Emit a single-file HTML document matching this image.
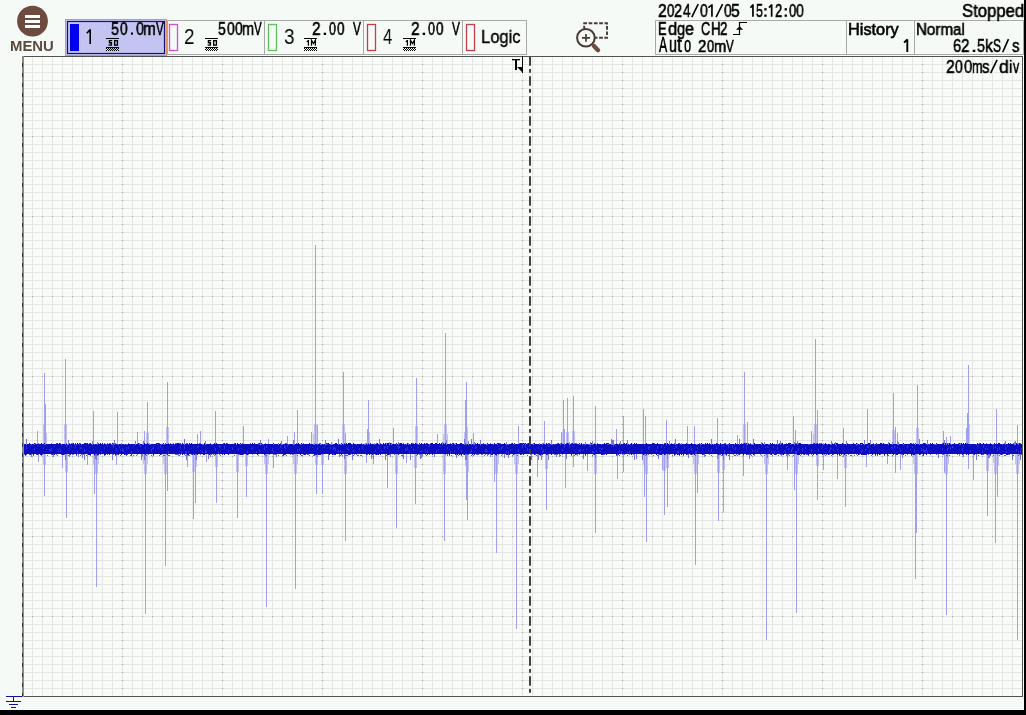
<!DOCTYPE html>
<html><head><meta charset="utf-8"><style>
html,body{margin:0;padding:0;}
body{width:1026px;height:715px;background:#f5faf6;position:relative;overflow:hidden;}
.t{position:absolute;white-space:pre;line-height:1;transform-origin:0 0;font-family:'Liberation Sans',sans-serif;will-change:transform;}
svg{position:absolute;left:0;top:0;}
</style></head><body>
<svg width="1026" height="715" viewBox="0 0 1026 715" shape-rendering="crispEdges">
<defs><pattern id="hatch" width="2" height="2" patternUnits="userSpaceOnUse"><rect x="0" y="0" width="1" height="1" fill="#000"/><rect x="1" y="1" width="1" height="1" fill="#000"/></pattern></defs>
<rect x="22" y="56" width="1001" height="641" fill="#f9fbf9"/>
<path d="M32.5 56V696M42.5 56V696M52.5 56V696M62.5 56V696M72.5 56V696M82.5 56V696M92.5 56V696M102.5 56V696M112.5 56V696M122.5 56V696M132.5 56V696M142.5 56V696M152.5 56V696M162.5 56V696M172.5 56V696M182.5 56V696M192.5 56V696M202.5 56V696M212.5 56V696M222.5 56V696M232.5 56V696M242.5 56V696M252.5 56V696M262.5 56V696M272.5 56V696M282.5 56V696M292.5 56V696M302.5 56V696M312.5 56V696M322.5 56V696M332.5 56V696M342.5 56V696M352.5 56V696M362.5 56V696M372.5 56V696M382.5 56V696M392.5 56V696M402.5 56V696M412.5 56V696M422.5 56V696M432.5 56V696M442.5 56V696M452.5 56V696M462.5 56V696M472.5 56V696M482.5 56V696M492.5 56V696M502.5 56V696M512.5 56V696M522.5 56V696M532.5 56V696M542.5 56V696M552.5 56V696M562.5 56V696M572.5 56V696M582.5 56V696M592.5 56V696M602.5 56V696M612.5 56V696M622.5 56V696M632.5 56V696M642.5 56V696M652.5 56V696M662.5 56V696M672.5 56V696M682.5 56V696M692.5 56V696M702.5 56V696M712.5 56V696M722.5 56V696M732.5 56V696M742.5 56V696M752.5 56V696M762.5 56V696M772.5 56V696M782.5 56V696M792.5 56V696M802.5 56V696M812.5 56V696M822.5 56V696M832.5 56V696M842.5 56V696M852.5 56V696M862.5 56V696M872.5 56V696M882.5 56V696M892.5 56V696M902.5 56V696M912.5 56V696M922.5 56V696M932.5 56V696M942.5 56V696M952.5 56V696M962.5 56V696M972.5 56V696M982.5 56V696M992.5 56V696M1002.5 56V696M1012.5 56V696M22 64.5H1022M22 72.5H1022M22 80.5H1022M22 88.5H1022M22 96.5H1022M22 104.5H1022M22 112.5H1022M22 120.5H1022M22 128.5H1022M22 136.5H1022M22 144.5H1022M22 152.5H1022M22 160.5H1022M22 168.5H1022M22 176.5H1022M22 184.5H1022M22 192.5H1022M22 200.5H1022M22 208.5H1022M22 216.5H1022M22 224.5H1022M22 232.5H1022M22 240.5H1022M22 248.5H1022M22 256.5H1022M22 264.5H1022M22 272.5H1022M22 280.5H1022M22 288.5H1022M22 296.5H1022M22 304.5H1022M22 312.5H1022M22 320.5H1022M22 328.5H1022M22 336.5H1022M22 344.5H1022M22 352.5H1022M22 360.5H1022M22 368.5H1022M22 376.5H1022M22 384.5H1022M22 392.5H1022M22 400.5H1022M22 408.5H1022M22 416.5H1022M22 424.5H1022M22 432.5H1022M22 440.5H1022M22 448.5H1022M22 456.5H1022M22 464.5H1022M22 472.5H1022M22 480.5H1022M22 488.5H1022M22 496.5H1022M22 504.5H1022M22 512.5H1022M22 520.5H1022M22 528.5H1022M22 536.5H1022M22 544.5H1022M22 552.5H1022M22 560.5H1022M22 568.5H1022M22 576.5H1022M22 584.5H1022M22 592.5H1022M22 600.5H1022M22 608.5H1022M22 616.5H1022M22 624.5H1022M22 632.5H1022M22 640.5H1022M22 648.5H1022M22 656.5H1022M22 664.5H1022M22 672.5H1022M22 680.5H1022M22 688.5H1022" stroke="#e3e6e3" stroke-width="1" fill="none"/>
<path d="M122 64h1v1h-1zM122 72h1v1h-1zM122 80h1v1h-1zM122 88h1v1h-1zM122 96h1v1h-1zM122 104h1v1h-1zM122 112h1v1h-1zM122 120h1v1h-1zM122 128h1v1h-1zM122 136h1v1h-1zM122 144h1v1h-1zM122 152h1v1h-1zM122 160h1v1h-1zM122 168h1v1h-1zM122 176h1v1h-1zM122 184h1v1h-1zM122 192h1v1h-1zM122 200h1v1h-1zM122 208h1v1h-1zM122 216h1v1h-1zM122 224h1v1h-1zM122 232h1v1h-1zM122 240h1v1h-1zM122 248h1v1h-1zM122 256h1v1h-1zM122 264h1v1h-1zM122 272h1v1h-1zM122 280h1v1h-1zM122 288h1v1h-1zM122 296h1v1h-1zM122 304h1v1h-1zM122 312h1v1h-1zM122 320h1v1h-1zM122 328h1v1h-1zM122 336h1v1h-1zM122 344h1v1h-1zM122 352h1v1h-1zM122 360h1v1h-1zM122 368h1v1h-1zM122 376h1v1h-1zM122 384h1v1h-1zM122 392h1v1h-1zM122 400h1v1h-1zM122 408h1v1h-1zM122 416h1v1h-1zM122 424h1v1h-1zM122 432h1v1h-1zM122 440h1v1h-1zM122 448h1v1h-1zM122 456h1v1h-1zM122 464h1v1h-1zM122 472h1v1h-1zM122 480h1v1h-1zM122 488h1v1h-1zM122 496h1v1h-1zM122 504h1v1h-1zM122 512h1v1h-1zM122 520h1v1h-1zM122 528h1v1h-1zM122 536h1v1h-1zM122 544h1v1h-1zM122 552h1v1h-1zM122 560h1v1h-1zM122 568h1v1h-1zM122 576h1v1h-1zM122 584h1v1h-1zM122 592h1v1h-1zM122 600h1v1h-1zM122 608h1v1h-1zM122 616h1v1h-1zM122 624h1v1h-1zM122 632h1v1h-1zM122 640h1v1h-1zM122 648h1v1h-1zM122 656h1v1h-1zM122 664h1v1h-1zM122 672h1v1h-1zM122 680h1v1h-1zM122 688h1v1h-1zM222 64h1v1h-1zM222 72h1v1h-1zM222 80h1v1h-1zM222 88h1v1h-1zM222 96h1v1h-1zM222 104h1v1h-1zM222 112h1v1h-1zM222 120h1v1h-1zM222 128h1v1h-1zM222 136h1v1h-1zM222 144h1v1h-1zM222 152h1v1h-1zM222 160h1v1h-1zM222 168h1v1h-1zM222 176h1v1h-1zM222 184h1v1h-1zM222 192h1v1h-1zM222 200h1v1h-1zM222 208h1v1h-1zM222 216h1v1h-1zM222 224h1v1h-1zM222 232h1v1h-1zM222 240h1v1h-1zM222 248h1v1h-1zM222 256h1v1h-1zM222 264h1v1h-1zM222 272h1v1h-1zM222 280h1v1h-1zM222 288h1v1h-1zM222 296h1v1h-1zM222 304h1v1h-1zM222 312h1v1h-1zM222 320h1v1h-1zM222 328h1v1h-1zM222 336h1v1h-1zM222 344h1v1h-1zM222 352h1v1h-1zM222 360h1v1h-1zM222 368h1v1h-1zM222 376h1v1h-1zM222 384h1v1h-1zM222 392h1v1h-1zM222 400h1v1h-1zM222 408h1v1h-1zM222 416h1v1h-1zM222 424h1v1h-1zM222 432h1v1h-1zM222 440h1v1h-1zM222 448h1v1h-1zM222 456h1v1h-1zM222 464h1v1h-1zM222 472h1v1h-1zM222 480h1v1h-1zM222 488h1v1h-1zM222 496h1v1h-1zM222 504h1v1h-1zM222 512h1v1h-1zM222 520h1v1h-1zM222 528h1v1h-1zM222 536h1v1h-1zM222 544h1v1h-1zM222 552h1v1h-1zM222 560h1v1h-1zM222 568h1v1h-1zM222 576h1v1h-1zM222 584h1v1h-1zM222 592h1v1h-1zM222 600h1v1h-1zM222 608h1v1h-1zM222 616h1v1h-1zM222 624h1v1h-1zM222 632h1v1h-1zM222 640h1v1h-1zM222 648h1v1h-1zM222 656h1v1h-1zM222 664h1v1h-1zM222 672h1v1h-1zM222 680h1v1h-1zM222 688h1v1h-1zM322 64h1v1h-1zM322 72h1v1h-1zM322 80h1v1h-1zM322 88h1v1h-1zM322 96h1v1h-1zM322 104h1v1h-1zM322 112h1v1h-1zM322 120h1v1h-1zM322 128h1v1h-1zM322 136h1v1h-1zM322 144h1v1h-1zM322 152h1v1h-1zM322 160h1v1h-1zM322 168h1v1h-1zM322 176h1v1h-1zM322 184h1v1h-1zM322 192h1v1h-1zM322 200h1v1h-1zM322 208h1v1h-1zM322 216h1v1h-1zM322 224h1v1h-1zM322 232h1v1h-1zM322 240h1v1h-1zM322 248h1v1h-1zM322 256h1v1h-1zM322 264h1v1h-1zM322 272h1v1h-1zM322 280h1v1h-1zM322 288h1v1h-1zM322 296h1v1h-1zM322 304h1v1h-1zM322 312h1v1h-1zM322 320h1v1h-1zM322 328h1v1h-1zM322 336h1v1h-1zM322 344h1v1h-1zM322 352h1v1h-1zM322 360h1v1h-1zM322 368h1v1h-1zM322 376h1v1h-1zM322 384h1v1h-1zM322 392h1v1h-1zM322 400h1v1h-1zM322 408h1v1h-1zM322 416h1v1h-1zM322 424h1v1h-1zM322 432h1v1h-1zM322 440h1v1h-1zM322 448h1v1h-1zM322 456h1v1h-1zM322 464h1v1h-1zM322 472h1v1h-1zM322 480h1v1h-1zM322 488h1v1h-1zM322 496h1v1h-1zM322 504h1v1h-1zM322 512h1v1h-1zM322 520h1v1h-1zM322 528h1v1h-1zM322 536h1v1h-1zM322 544h1v1h-1zM322 552h1v1h-1zM322 560h1v1h-1zM322 568h1v1h-1zM322 576h1v1h-1zM322 584h1v1h-1zM322 592h1v1h-1zM322 600h1v1h-1zM322 608h1v1h-1zM322 616h1v1h-1zM322 624h1v1h-1zM322 632h1v1h-1zM322 640h1v1h-1zM322 648h1v1h-1zM322 656h1v1h-1zM322 664h1v1h-1zM322 672h1v1h-1zM322 680h1v1h-1zM322 688h1v1h-1zM422 64h1v1h-1zM422 72h1v1h-1zM422 80h1v1h-1zM422 88h1v1h-1zM422 96h1v1h-1zM422 104h1v1h-1zM422 112h1v1h-1zM422 120h1v1h-1zM422 128h1v1h-1zM422 136h1v1h-1zM422 144h1v1h-1zM422 152h1v1h-1zM422 160h1v1h-1zM422 168h1v1h-1zM422 176h1v1h-1zM422 184h1v1h-1zM422 192h1v1h-1zM422 200h1v1h-1zM422 208h1v1h-1zM422 216h1v1h-1zM422 224h1v1h-1zM422 232h1v1h-1zM422 240h1v1h-1zM422 248h1v1h-1zM422 256h1v1h-1zM422 264h1v1h-1zM422 272h1v1h-1zM422 280h1v1h-1zM422 288h1v1h-1zM422 296h1v1h-1zM422 304h1v1h-1zM422 312h1v1h-1zM422 320h1v1h-1zM422 328h1v1h-1zM422 336h1v1h-1zM422 344h1v1h-1zM422 352h1v1h-1zM422 360h1v1h-1zM422 368h1v1h-1zM422 376h1v1h-1zM422 384h1v1h-1zM422 392h1v1h-1zM422 400h1v1h-1zM422 408h1v1h-1zM422 416h1v1h-1zM422 424h1v1h-1zM422 432h1v1h-1zM422 440h1v1h-1zM422 448h1v1h-1zM422 456h1v1h-1zM422 464h1v1h-1zM422 472h1v1h-1zM422 480h1v1h-1zM422 488h1v1h-1zM422 496h1v1h-1zM422 504h1v1h-1zM422 512h1v1h-1zM422 520h1v1h-1zM422 528h1v1h-1zM422 536h1v1h-1zM422 544h1v1h-1zM422 552h1v1h-1zM422 560h1v1h-1zM422 568h1v1h-1zM422 576h1v1h-1zM422 584h1v1h-1zM422 592h1v1h-1zM422 600h1v1h-1zM422 608h1v1h-1zM422 616h1v1h-1zM422 624h1v1h-1zM422 632h1v1h-1zM422 640h1v1h-1zM422 648h1v1h-1zM422 656h1v1h-1zM422 664h1v1h-1zM422 672h1v1h-1zM422 680h1v1h-1zM422 688h1v1h-1zM522 64h1v1h-1zM522 72h1v1h-1zM522 80h1v1h-1zM522 88h1v1h-1zM522 96h1v1h-1zM522 104h1v1h-1zM522 112h1v1h-1zM522 120h1v1h-1zM522 128h1v1h-1zM522 136h1v1h-1zM522 144h1v1h-1zM522 152h1v1h-1zM522 160h1v1h-1zM522 168h1v1h-1zM522 176h1v1h-1zM522 184h1v1h-1zM522 192h1v1h-1zM522 200h1v1h-1zM522 208h1v1h-1zM522 216h1v1h-1zM522 224h1v1h-1zM522 232h1v1h-1zM522 240h1v1h-1zM522 248h1v1h-1zM522 256h1v1h-1zM522 264h1v1h-1zM522 272h1v1h-1zM522 280h1v1h-1zM522 288h1v1h-1zM522 296h1v1h-1zM522 304h1v1h-1zM522 312h1v1h-1zM522 320h1v1h-1zM522 328h1v1h-1zM522 336h1v1h-1zM522 344h1v1h-1zM522 352h1v1h-1zM522 360h1v1h-1zM522 368h1v1h-1zM522 376h1v1h-1zM522 384h1v1h-1zM522 392h1v1h-1zM522 400h1v1h-1zM522 408h1v1h-1zM522 416h1v1h-1zM522 424h1v1h-1zM522 432h1v1h-1zM522 440h1v1h-1zM522 448h1v1h-1zM522 456h1v1h-1zM522 464h1v1h-1zM522 472h1v1h-1zM522 480h1v1h-1zM522 488h1v1h-1zM522 496h1v1h-1zM522 504h1v1h-1zM522 512h1v1h-1zM522 520h1v1h-1zM522 528h1v1h-1zM522 536h1v1h-1zM522 544h1v1h-1zM522 552h1v1h-1zM522 560h1v1h-1zM522 568h1v1h-1zM522 576h1v1h-1zM522 584h1v1h-1zM522 592h1v1h-1zM522 600h1v1h-1zM522 608h1v1h-1zM522 616h1v1h-1zM522 624h1v1h-1zM522 632h1v1h-1zM522 640h1v1h-1zM522 648h1v1h-1zM522 656h1v1h-1zM522 664h1v1h-1zM522 672h1v1h-1zM522 680h1v1h-1zM522 688h1v1h-1zM622 64h1v1h-1zM622 72h1v1h-1zM622 80h1v1h-1zM622 88h1v1h-1zM622 96h1v1h-1zM622 104h1v1h-1zM622 112h1v1h-1zM622 120h1v1h-1zM622 128h1v1h-1zM622 136h1v1h-1zM622 144h1v1h-1zM622 152h1v1h-1zM622 160h1v1h-1zM622 168h1v1h-1zM622 176h1v1h-1zM622 184h1v1h-1zM622 192h1v1h-1zM622 200h1v1h-1zM622 208h1v1h-1zM622 216h1v1h-1zM622 224h1v1h-1zM622 232h1v1h-1zM622 240h1v1h-1zM622 248h1v1h-1zM622 256h1v1h-1zM622 264h1v1h-1zM622 272h1v1h-1zM622 280h1v1h-1zM622 288h1v1h-1zM622 296h1v1h-1zM622 304h1v1h-1zM622 312h1v1h-1zM622 320h1v1h-1zM622 328h1v1h-1zM622 336h1v1h-1zM622 344h1v1h-1zM622 352h1v1h-1zM622 360h1v1h-1zM622 368h1v1h-1zM622 376h1v1h-1zM622 384h1v1h-1zM622 392h1v1h-1zM622 400h1v1h-1zM622 408h1v1h-1zM622 416h1v1h-1zM622 424h1v1h-1zM622 432h1v1h-1zM622 440h1v1h-1zM622 448h1v1h-1zM622 456h1v1h-1zM622 464h1v1h-1zM622 472h1v1h-1zM622 480h1v1h-1zM622 488h1v1h-1zM622 496h1v1h-1zM622 504h1v1h-1zM622 512h1v1h-1zM622 520h1v1h-1zM622 528h1v1h-1zM622 536h1v1h-1zM622 544h1v1h-1zM622 552h1v1h-1zM622 560h1v1h-1zM622 568h1v1h-1zM622 576h1v1h-1zM622 584h1v1h-1zM622 592h1v1h-1zM622 600h1v1h-1zM622 608h1v1h-1zM622 616h1v1h-1zM622 624h1v1h-1zM622 632h1v1h-1zM622 640h1v1h-1zM622 648h1v1h-1zM622 656h1v1h-1zM622 664h1v1h-1zM622 672h1v1h-1zM622 680h1v1h-1zM622 688h1v1h-1zM722 64h1v1h-1zM722 72h1v1h-1zM722 80h1v1h-1zM722 88h1v1h-1zM722 96h1v1h-1zM722 104h1v1h-1zM722 112h1v1h-1zM722 120h1v1h-1zM722 128h1v1h-1zM722 136h1v1h-1zM722 144h1v1h-1zM722 152h1v1h-1zM722 160h1v1h-1zM722 168h1v1h-1zM722 176h1v1h-1zM722 184h1v1h-1zM722 192h1v1h-1zM722 200h1v1h-1zM722 208h1v1h-1zM722 216h1v1h-1zM722 224h1v1h-1zM722 232h1v1h-1zM722 240h1v1h-1zM722 248h1v1h-1zM722 256h1v1h-1zM722 264h1v1h-1zM722 272h1v1h-1zM722 280h1v1h-1zM722 288h1v1h-1zM722 296h1v1h-1zM722 304h1v1h-1zM722 312h1v1h-1zM722 320h1v1h-1zM722 328h1v1h-1zM722 336h1v1h-1zM722 344h1v1h-1zM722 352h1v1h-1zM722 360h1v1h-1zM722 368h1v1h-1zM722 376h1v1h-1zM722 384h1v1h-1zM722 392h1v1h-1zM722 400h1v1h-1zM722 408h1v1h-1zM722 416h1v1h-1zM722 424h1v1h-1zM722 432h1v1h-1zM722 440h1v1h-1zM722 448h1v1h-1zM722 456h1v1h-1zM722 464h1v1h-1zM722 472h1v1h-1zM722 480h1v1h-1zM722 488h1v1h-1zM722 496h1v1h-1zM722 504h1v1h-1zM722 512h1v1h-1zM722 520h1v1h-1zM722 528h1v1h-1zM722 536h1v1h-1zM722 544h1v1h-1zM722 552h1v1h-1zM722 560h1v1h-1zM722 568h1v1h-1zM722 576h1v1h-1zM722 584h1v1h-1zM722 592h1v1h-1zM722 600h1v1h-1zM722 608h1v1h-1zM722 616h1v1h-1zM722 624h1v1h-1zM722 632h1v1h-1zM722 640h1v1h-1zM722 648h1v1h-1zM722 656h1v1h-1zM722 664h1v1h-1zM722 672h1v1h-1zM722 680h1v1h-1zM722 688h1v1h-1zM822 64h1v1h-1zM822 72h1v1h-1zM822 80h1v1h-1zM822 88h1v1h-1zM822 96h1v1h-1zM822 104h1v1h-1zM822 112h1v1h-1zM822 120h1v1h-1zM822 128h1v1h-1zM822 136h1v1h-1zM822 144h1v1h-1zM822 152h1v1h-1zM822 160h1v1h-1zM822 168h1v1h-1zM822 176h1v1h-1zM822 184h1v1h-1zM822 192h1v1h-1zM822 200h1v1h-1zM822 208h1v1h-1zM822 216h1v1h-1zM822 224h1v1h-1zM822 232h1v1h-1zM822 240h1v1h-1zM822 248h1v1h-1zM822 256h1v1h-1zM822 264h1v1h-1zM822 272h1v1h-1zM822 280h1v1h-1zM822 288h1v1h-1zM822 296h1v1h-1zM822 304h1v1h-1zM822 312h1v1h-1zM822 320h1v1h-1zM822 328h1v1h-1zM822 336h1v1h-1zM822 344h1v1h-1zM822 352h1v1h-1zM822 360h1v1h-1zM822 368h1v1h-1zM822 376h1v1h-1zM822 384h1v1h-1zM822 392h1v1h-1zM822 400h1v1h-1zM822 408h1v1h-1zM822 416h1v1h-1zM822 424h1v1h-1zM822 432h1v1h-1zM822 440h1v1h-1zM822 448h1v1h-1zM822 456h1v1h-1zM822 464h1v1h-1zM822 472h1v1h-1zM822 480h1v1h-1zM822 488h1v1h-1zM822 496h1v1h-1zM822 504h1v1h-1zM822 512h1v1h-1zM822 520h1v1h-1zM822 528h1v1h-1zM822 536h1v1h-1zM822 544h1v1h-1zM822 552h1v1h-1zM822 560h1v1h-1zM822 568h1v1h-1zM822 576h1v1h-1zM822 584h1v1h-1zM822 592h1v1h-1zM822 600h1v1h-1zM822 608h1v1h-1zM822 616h1v1h-1zM822 624h1v1h-1zM822 632h1v1h-1zM822 640h1v1h-1zM822 648h1v1h-1zM822 656h1v1h-1zM822 664h1v1h-1zM822 672h1v1h-1zM822 680h1v1h-1zM822 688h1v1h-1zM922 64h1v1h-1zM922 72h1v1h-1zM922 80h1v1h-1zM922 88h1v1h-1zM922 96h1v1h-1zM922 104h1v1h-1zM922 112h1v1h-1zM922 120h1v1h-1zM922 128h1v1h-1zM922 136h1v1h-1zM922 144h1v1h-1zM922 152h1v1h-1zM922 160h1v1h-1zM922 168h1v1h-1zM922 176h1v1h-1zM922 184h1v1h-1zM922 192h1v1h-1zM922 200h1v1h-1zM922 208h1v1h-1zM922 216h1v1h-1zM922 224h1v1h-1zM922 232h1v1h-1zM922 240h1v1h-1zM922 248h1v1h-1zM922 256h1v1h-1zM922 264h1v1h-1zM922 272h1v1h-1zM922 280h1v1h-1zM922 288h1v1h-1zM922 296h1v1h-1zM922 304h1v1h-1zM922 312h1v1h-1zM922 320h1v1h-1zM922 328h1v1h-1zM922 336h1v1h-1zM922 344h1v1h-1zM922 352h1v1h-1zM922 360h1v1h-1zM922 368h1v1h-1zM922 376h1v1h-1zM922 384h1v1h-1zM922 392h1v1h-1zM922 400h1v1h-1zM922 408h1v1h-1zM922 416h1v1h-1zM922 424h1v1h-1zM922 432h1v1h-1zM922 440h1v1h-1zM922 448h1v1h-1zM922 456h1v1h-1zM922 464h1v1h-1zM922 472h1v1h-1zM922 480h1v1h-1zM922 488h1v1h-1zM922 496h1v1h-1zM922 504h1v1h-1zM922 512h1v1h-1zM922 520h1v1h-1zM922 528h1v1h-1zM922 536h1v1h-1zM922 544h1v1h-1zM922 552h1v1h-1zM922 560h1v1h-1zM922 568h1v1h-1zM922 576h1v1h-1zM922 584h1v1h-1zM922 592h1v1h-1zM922 600h1v1h-1zM922 608h1v1h-1zM922 616h1v1h-1zM922 624h1v1h-1zM922 632h1v1h-1zM922 640h1v1h-1zM922 648h1v1h-1zM922 656h1v1h-1zM922 664h1v1h-1zM922 672h1v1h-1zM922 680h1v1h-1zM922 688h1v1h-1zM32 136h1v1h-1zM42 136h1v1h-1zM52 136h1v1h-1zM62 136h1v1h-1zM72 136h1v1h-1zM82 136h1v1h-1zM92 136h1v1h-1zM102 136h1v1h-1zM112 136h1v1h-1zM122 136h1v1h-1zM132 136h1v1h-1zM142 136h1v1h-1zM152 136h1v1h-1zM162 136h1v1h-1zM172 136h1v1h-1zM182 136h1v1h-1zM192 136h1v1h-1zM202 136h1v1h-1zM212 136h1v1h-1zM222 136h1v1h-1zM232 136h1v1h-1zM242 136h1v1h-1zM252 136h1v1h-1zM262 136h1v1h-1zM272 136h1v1h-1zM282 136h1v1h-1zM292 136h1v1h-1zM302 136h1v1h-1zM312 136h1v1h-1zM322 136h1v1h-1zM332 136h1v1h-1zM342 136h1v1h-1zM352 136h1v1h-1zM362 136h1v1h-1zM372 136h1v1h-1zM382 136h1v1h-1zM392 136h1v1h-1zM402 136h1v1h-1zM412 136h1v1h-1zM422 136h1v1h-1zM432 136h1v1h-1zM442 136h1v1h-1zM452 136h1v1h-1zM462 136h1v1h-1zM472 136h1v1h-1zM482 136h1v1h-1zM492 136h1v1h-1zM502 136h1v1h-1zM512 136h1v1h-1zM522 136h1v1h-1zM532 136h1v1h-1zM542 136h1v1h-1zM552 136h1v1h-1zM562 136h1v1h-1zM572 136h1v1h-1zM582 136h1v1h-1zM592 136h1v1h-1zM602 136h1v1h-1zM612 136h1v1h-1zM622 136h1v1h-1zM632 136h1v1h-1zM642 136h1v1h-1zM652 136h1v1h-1zM662 136h1v1h-1zM672 136h1v1h-1zM682 136h1v1h-1zM692 136h1v1h-1zM702 136h1v1h-1zM712 136h1v1h-1zM722 136h1v1h-1zM732 136h1v1h-1zM742 136h1v1h-1zM752 136h1v1h-1zM762 136h1v1h-1zM772 136h1v1h-1zM782 136h1v1h-1zM792 136h1v1h-1zM802 136h1v1h-1zM812 136h1v1h-1zM822 136h1v1h-1zM832 136h1v1h-1zM842 136h1v1h-1zM852 136h1v1h-1zM862 136h1v1h-1zM872 136h1v1h-1zM882 136h1v1h-1zM892 136h1v1h-1zM902 136h1v1h-1zM912 136h1v1h-1zM922 136h1v1h-1zM932 136h1v1h-1zM942 136h1v1h-1zM952 136h1v1h-1zM962 136h1v1h-1zM972 136h1v1h-1zM982 136h1v1h-1zM992 136h1v1h-1zM1002 136h1v1h-1zM1012 136h1v1h-1zM32 216h1v1h-1zM42 216h1v1h-1zM52 216h1v1h-1zM62 216h1v1h-1zM72 216h1v1h-1zM82 216h1v1h-1zM92 216h1v1h-1zM102 216h1v1h-1zM112 216h1v1h-1zM122 216h1v1h-1zM132 216h1v1h-1zM142 216h1v1h-1zM152 216h1v1h-1zM162 216h1v1h-1zM172 216h1v1h-1zM182 216h1v1h-1zM192 216h1v1h-1zM202 216h1v1h-1zM212 216h1v1h-1zM222 216h1v1h-1zM232 216h1v1h-1zM242 216h1v1h-1zM252 216h1v1h-1zM262 216h1v1h-1zM272 216h1v1h-1zM282 216h1v1h-1zM292 216h1v1h-1zM302 216h1v1h-1zM312 216h1v1h-1zM322 216h1v1h-1zM332 216h1v1h-1zM342 216h1v1h-1zM352 216h1v1h-1zM362 216h1v1h-1zM372 216h1v1h-1zM382 216h1v1h-1zM392 216h1v1h-1zM402 216h1v1h-1zM412 216h1v1h-1zM422 216h1v1h-1zM432 216h1v1h-1zM442 216h1v1h-1zM452 216h1v1h-1zM462 216h1v1h-1zM472 216h1v1h-1zM482 216h1v1h-1zM492 216h1v1h-1zM502 216h1v1h-1zM512 216h1v1h-1zM522 216h1v1h-1zM532 216h1v1h-1zM542 216h1v1h-1zM552 216h1v1h-1zM562 216h1v1h-1zM572 216h1v1h-1zM582 216h1v1h-1zM592 216h1v1h-1zM602 216h1v1h-1zM612 216h1v1h-1zM622 216h1v1h-1zM632 216h1v1h-1zM642 216h1v1h-1zM652 216h1v1h-1zM662 216h1v1h-1zM672 216h1v1h-1zM682 216h1v1h-1zM692 216h1v1h-1zM702 216h1v1h-1zM712 216h1v1h-1zM722 216h1v1h-1zM732 216h1v1h-1zM742 216h1v1h-1zM752 216h1v1h-1zM762 216h1v1h-1zM772 216h1v1h-1zM782 216h1v1h-1zM792 216h1v1h-1zM802 216h1v1h-1zM812 216h1v1h-1zM822 216h1v1h-1zM832 216h1v1h-1zM842 216h1v1h-1zM852 216h1v1h-1zM862 216h1v1h-1zM872 216h1v1h-1zM882 216h1v1h-1zM892 216h1v1h-1zM902 216h1v1h-1zM912 216h1v1h-1zM922 216h1v1h-1zM932 216h1v1h-1zM942 216h1v1h-1zM952 216h1v1h-1zM962 216h1v1h-1zM972 216h1v1h-1zM982 216h1v1h-1zM992 216h1v1h-1zM1002 216h1v1h-1zM1012 216h1v1h-1zM32 296h1v1h-1zM42 296h1v1h-1zM52 296h1v1h-1zM62 296h1v1h-1zM72 296h1v1h-1zM82 296h1v1h-1zM92 296h1v1h-1zM102 296h1v1h-1zM112 296h1v1h-1zM122 296h1v1h-1zM132 296h1v1h-1zM142 296h1v1h-1zM152 296h1v1h-1zM162 296h1v1h-1zM172 296h1v1h-1zM182 296h1v1h-1zM192 296h1v1h-1zM202 296h1v1h-1zM212 296h1v1h-1zM222 296h1v1h-1zM232 296h1v1h-1zM242 296h1v1h-1zM252 296h1v1h-1zM262 296h1v1h-1zM272 296h1v1h-1zM282 296h1v1h-1zM292 296h1v1h-1zM302 296h1v1h-1zM312 296h1v1h-1zM322 296h1v1h-1zM332 296h1v1h-1zM342 296h1v1h-1zM352 296h1v1h-1zM362 296h1v1h-1zM372 296h1v1h-1zM382 296h1v1h-1zM392 296h1v1h-1zM402 296h1v1h-1zM412 296h1v1h-1zM422 296h1v1h-1zM432 296h1v1h-1zM442 296h1v1h-1zM452 296h1v1h-1zM462 296h1v1h-1zM472 296h1v1h-1zM482 296h1v1h-1zM492 296h1v1h-1zM502 296h1v1h-1zM512 296h1v1h-1zM522 296h1v1h-1zM532 296h1v1h-1zM542 296h1v1h-1zM552 296h1v1h-1zM562 296h1v1h-1zM572 296h1v1h-1zM582 296h1v1h-1zM592 296h1v1h-1zM602 296h1v1h-1zM612 296h1v1h-1zM622 296h1v1h-1zM632 296h1v1h-1zM642 296h1v1h-1zM652 296h1v1h-1zM662 296h1v1h-1zM672 296h1v1h-1zM682 296h1v1h-1zM692 296h1v1h-1zM702 296h1v1h-1zM712 296h1v1h-1zM722 296h1v1h-1zM732 296h1v1h-1zM742 296h1v1h-1zM752 296h1v1h-1zM762 296h1v1h-1zM772 296h1v1h-1zM782 296h1v1h-1zM792 296h1v1h-1zM802 296h1v1h-1zM812 296h1v1h-1zM822 296h1v1h-1zM832 296h1v1h-1zM842 296h1v1h-1zM852 296h1v1h-1zM862 296h1v1h-1zM872 296h1v1h-1zM882 296h1v1h-1zM892 296h1v1h-1zM902 296h1v1h-1zM912 296h1v1h-1zM922 296h1v1h-1zM932 296h1v1h-1zM942 296h1v1h-1zM952 296h1v1h-1zM962 296h1v1h-1zM972 296h1v1h-1zM982 296h1v1h-1zM992 296h1v1h-1zM1002 296h1v1h-1zM1012 296h1v1h-1zM32 376h1v1h-1zM42 376h1v1h-1zM52 376h1v1h-1zM62 376h1v1h-1zM72 376h1v1h-1zM82 376h1v1h-1zM92 376h1v1h-1zM102 376h1v1h-1zM112 376h1v1h-1zM122 376h1v1h-1zM132 376h1v1h-1zM142 376h1v1h-1zM152 376h1v1h-1zM162 376h1v1h-1zM172 376h1v1h-1zM182 376h1v1h-1zM192 376h1v1h-1zM202 376h1v1h-1zM212 376h1v1h-1zM222 376h1v1h-1zM232 376h1v1h-1zM242 376h1v1h-1zM252 376h1v1h-1zM262 376h1v1h-1zM272 376h1v1h-1zM282 376h1v1h-1zM292 376h1v1h-1zM302 376h1v1h-1zM312 376h1v1h-1zM322 376h1v1h-1zM332 376h1v1h-1zM342 376h1v1h-1zM352 376h1v1h-1zM362 376h1v1h-1zM372 376h1v1h-1zM382 376h1v1h-1zM392 376h1v1h-1zM402 376h1v1h-1zM412 376h1v1h-1zM422 376h1v1h-1zM432 376h1v1h-1zM442 376h1v1h-1zM452 376h1v1h-1zM462 376h1v1h-1zM472 376h1v1h-1zM482 376h1v1h-1zM492 376h1v1h-1zM502 376h1v1h-1zM512 376h1v1h-1zM522 376h1v1h-1zM532 376h1v1h-1zM542 376h1v1h-1zM552 376h1v1h-1zM562 376h1v1h-1zM572 376h1v1h-1zM582 376h1v1h-1zM592 376h1v1h-1zM602 376h1v1h-1zM612 376h1v1h-1zM622 376h1v1h-1zM632 376h1v1h-1zM642 376h1v1h-1zM652 376h1v1h-1zM662 376h1v1h-1zM672 376h1v1h-1zM682 376h1v1h-1zM692 376h1v1h-1zM702 376h1v1h-1zM712 376h1v1h-1zM722 376h1v1h-1zM732 376h1v1h-1zM742 376h1v1h-1zM752 376h1v1h-1zM762 376h1v1h-1zM772 376h1v1h-1zM782 376h1v1h-1zM792 376h1v1h-1zM802 376h1v1h-1zM812 376h1v1h-1zM822 376h1v1h-1zM832 376h1v1h-1zM842 376h1v1h-1zM852 376h1v1h-1zM862 376h1v1h-1zM872 376h1v1h-1zM882 376h1v1h-1zM892 376h1v1h-1zM902 376h1v1h-1zM912 376h1v1h-1zM922 376h1v1h-1zM932 376h1v1h-1zM942 376h1v1h-1zM952 376h1v1h-1zM962 376h1v1h-1zM972 376h1v1h-1zM982 376h1v1h-1zM992 376h1v1h-1zM1002 376h1v1h-1zM1012 376h1v1h-1zM32 456h1v1h-1zM42 456h1v1h-1zM52 456h1v1h-1zM62 456h1v1h-1zM72 456h1v1h-1zM82 456h1v1h-1zM92 456h1v1h-1zM102 456h1v1h-1zM112 456h1v1h-1zM122 456h1v1h-1zM132 456h1v1h-1zM142 456h1v1h-1zM152 456h1v1h-1zM162 456h1v1h-1zM172 456h1v1h-1zM182 456h1v1h-1zM192 456h1v1h-1zM202 456h1v1h-1zM212 456h1v1h-1zM222 456h1v1h-1zM232 456h1v1h-1zM242 456h1v1h-1zM252 456h1v1h-1zM262 456h1v1h-1zM272 456h1v1h-1zM282 456h1v1h-1zM292 456h1v1h-1zM302 456h1v1h-1zM312 456h1v1h-1zM322 456h1v1h-1zM332 456h1v1h-1zM342 456h1v1h-1zM352 456h1v1h-1zM362 456h1v1h-1zM372 456h1v1h-1zM382 456h1v1h-1zM392 456h1v1h-1zM402 456h1v1h-1zM412 456h1v1h-1zM422 456h1v1h-1zM432 456h1v1h-1zM442 456h1v1h-1zM452 456h1v1h-1zM462 456h1v1h-1zM472 456h1v1h-1zM482 456h1v1h-1zM492 456h1v1h-1zM502 456h1v1h-1zM512 456h1v1h-1zM522 456h1v1h-1zM532 456h1v1h-1zM542 456h1v1h-1zM552 456h1v1h-1zM562 456h1v1h-1zM572 456h1v1h-1zM582 456h1v1h-1zM592 456h1v1h-1zM602 456h1v1h-1zM612 456h1v1h-1zM622 456h1v1h-1zM632 456h1v1h-1zM642 456h1v1h-1zM652 456h1v1h-1zM662 456h1v1h-1zM672 456h1v1h-1zM682 456h1v1h-1zM692 456h1v1h-1zM702 456h1v1h-1zM712 456h1v1h-1zM722 456h1v1h-1zM732 456h1v1h-1zM742 456h1v1h-1zM752 456h1v1h-1zM762 456h1v1h-1zM772 456h1v1h-1zM782 456h1v1h-1zM792 456h1v1h-1zM802 456h1v1h-1zM812 456h1v1h-1zM822 456h1v1h-1zM832 456h1v1h-1zM842 456h1v1h-1zM852 456h1v1h-1zM862 456h1v1h-1zM872 456h1v1h-1zM882 456h1v1h-1zM892 456h1v1h-1zM902 456h1v1h-1zM912 456h1v1h-1zM922 456h1v1h-1zM932 456h1v1h-1zM942 456h1v1h-1zM952 456h1v1h-1zM962 456h1v1h-1zM972 456h1v1h-1zM982 456h1v1h-1zM992 456h1v1h-1zM1002 456h1v1h-1zM1012 456h1v1h-1zM32 536h1v1h-1zM42 536h1v1h-1zM52 536h1v1h-1zM62 536h1v1h-1zM72 536h1v1h-1zM82 536h1v1h-1zM92 536h1v1h-1zM102 536h1v1h-1zM112 536h1v1h-1zM122 536h1v1h-1zM132 536h1v1h-1zM142 536h1v1h-1zM152 536h1v1h-1zM162 536h1v1h-1zM172 536h1v1h-1zM182 536h1v1h-1zM192 536h1v1h-1zM202 536h1v1h-1zM212 536h1v1h-1zM222 536h1v1h-1zM232 536h1v1h-1zM242 536h1v1h-1zM252 536h1v1h-1zM262 536h1v1h-1zM272 536h1v1h-1zM282 536h1v1h-1zM292 536h1v1h-1zM302 536h1v1h-1zM312 536h1v1h-1zM322 536h1v1h-1zM332 536h1v1h-1zM342 536h1v1h-1zM352 536h1v1h-1zM362 536h1v1h-1zM372 536h1v1h-1zM382 536h1v1h-1zM392 536h1v1h-1zM402 536h1v1h-1zM412 536h1v1h-1zM422 536h1v1h-1zM432 536h1v1h-1zM442 536h1v1h-1zM452 536h1v1h-1zM462 536h1v1h-1zM472 536h1v1h-1zM482 536h1v1h-1zM492 536h1v1h-1zM502 536h1v1h-1zM512 536h1v1h-1zM522 536h1v1h-1zM532 536h1v1h-1zM542 536h1v1h-1zM552 536h1v1h-1zM562 536h1v1h-1zM572 536h1v1h-1zM582 536h1v1h-1zM592 536h1v1h-1zM602 536h1v1h-1zM612 536h1v1h-1zM622 536h1v1h-1zM632 536h1v1h-1zM642 536h1v1h-1zM652 536h1v1h-1zM662 536h1v1h-1zM672 536h1v1h-1zM682 536h1v1h-1zM692 536h1v1h-1zM702 536h1v1h-1zM712 536h1v1h-1zM722 536h1v1h-1zM732 536h1v1h-1zM742 536h1v1h-1zM752 536h1v1h-1zM762 536h1v1h-1zM772 536h1v1h-1zM782 536h1v1h-1zM792 536h1v1h-1zM802 536h1v1h-1zM812 536h1v1h-1zM822 536h1v1h-1zM832 536h1v1h-1zM842 536h1v1h-1zM852 536h1v1h-1zM862 536h1v1h-1zM872 536h1v1h-1zM882 536h1v1h-1zM892 536h1v1h-1zM902 536h1v1h-1zM912 536h1v1h-1zM922 536h1v1h-1zM932 536h1v1h-1zM942 536h1v1h-1zM952 536h1v1h-1zM962 536h1v1h-1zM972 536h1v1h-1zM982 536h1v1h-1zM992 536h1v1h-1zM1002 536h1v1h-1zM1012 536h1v1h-1zM32 616h1v1h-1zM42 616h1v1h-1zM52 616h1v1h-1zM62 616h1v1h-1zM72 616h1v1h-1zM82 616h1v1h-1zM92 616h1v1h-1zM102 616h1v1h-1zM112 616h1v1h-1zM122 616h1v1h-1zM132 616h1v1h-1zM142 616h1v1h-1zM152 616h1v1h-1zM162 616h1v1h-1zM172 616h1v1h-1zM182 616h1v1h-1zM192 616h1v1h-1zM202 616h1v1h-1zM212 616h1v1h-1zM222 616h1v1h-1zM232 616h1v1h-1zM242 616h1v1h-1zM252 616h1v1h-1zM262 616h1v1h-1zM272 616h1v1h-1zM282 616h1v1h-1zM292 616h1v1h-1zM302 616h1v1h-1zM312 616h1v1h-1zM322 616h1v1h-1zM332 616h1v1h-1zM342 616h1v1h-1zM352 616h1v1h-1zM362 616h1v1h-1zM372 616h1v1h-1zM382 616h1v1h-1zM392 616h1v1h-1zM402 616h1v1h-1zM412 616h1v1h-1zM422 616h1v1h-1zM432 616h1v1h-1zM442 616h1v1h-1zM452 616h1v1h-1zM462 616h1v1h-1zM472 616h1v1h-1zM482 616h1v1h-1zM492 616h1v1h-1zM502 616h1v1h-1zM512 616h1v1h-1zM522 616h1v1h-1zM532 616h1v1h-1zM542 616h1v1h-1zM552 616h1v1h-1zM562 616h1v1h-1zM572 616h1v1h-1zM582 616h1v1h-1zM592 616h1v1h-1zM602 616h1v1h-1zM612 616h1v1h-1zM622 616h1v1h-1zM632 616h1v1h-1zM642 616h1v1h-1zM652 616h1v1h-1zM662 616h1v1h-1zM672 616h1v1h-1zM682 616h1v1h-1zM692 616h1v1h-1zM702 616h1v1h-1zM712 616h1v1h-1zM722 616h1v1h-1zM732 616h1v1h-1zM742 616h1v1h-1zM752 616h1v1h-1zM762 616h1v1h-1zM772 616h1v1h-1zM782 616h1v1h-1zM792 616h1v1h-1zM802 616h1v1h-1zM812 616h1v1h-1zM822 616h1v1h-1zM832 616h1v1h-1zM842 616h1v1h-1zM852 616h1v1h-1zM862 616h1v1h-1zM872 616h1v1h-1zM882 616h1v1h-1zM892 616h1v1h-1zM902 616h1v1h-1zM912 616h1v1h-1zM922 616h1v1h-1zM932 616h1v1h-1zM942 616h1v1h-1zM952 616h1v1h-1zM962 616h1v1h-1zM972 616h1v1h-1zM982 616h1v1h-1zM992 616h1v1h-1zM1002 616h1v1h-1zM1012 616h1v1h-1z" fill="#9ea09e"/>
<path d="M22 56.5H1023M1022.5 56V697M22 696.5H1023" stroke="#505450" stroke-width="1" fill="none"/>
<rect x="22" y="56" width="2" height="641" fill="#8a8c8a"/>
<path d="M22.5 63V696" stroke="#303030" stroke-width="1.2" stroke-dasharray="4 6" fill="none"/>
<path d="M43 424.0h3V446h-3zM44 433.4h3V446h-3zM64 424.0h3V446h-3zM146 432.8h3V446h-3zM166 426.7h3V446h-3zM314 424.0h3V446h-3zM313 434.0h5V446h-5zM342 424.0h3V446h-3zM367 432.2h3V446h-3zM415 425.5h3V446h-3zM444 424.0h3V446h-3zM443 434.0h5V446h-5zM465 426.8h3V446h-3zM464 432.2h3V446h-3zM562 432.2h3V446h-3zM566 431.6h3V446h-3zM572 431.0h3V446h-3zM743 424.0h3V446h-3zM814 424.0h3V446h-3zM813 434.0h5V446h-5zM814 432.2h3V446h-3zM892 429.9h3V446h-3zM916 427.6h3V446h-3zM967 424.0h3V446h-3zM43 452h3V465.1h-3zM65 452h3V471.8h-3zM95 452h3V474.0h-3zM94 452h5V464.0h-5zM93 452h3V464.6h-3zM144 452h3V474.0h-3zM143 452h5V464.0h-5zM164 452h3V474.0h-3zM163 452h5V464.0h-5zM192 452h3V472.1h-3zM194 452h3V467.3h-3zM215 452h3V467.1h-3zM236 452h3V471.8h-3zM245 452h3V465.5h-3zM265 452h3V474.0h-3zM264 452h5V464.0h-5zM294 452h3V474.0h-3zM293 452h5V464.0h-5zM315 452h3V464.5h-3zM321 452h3V464.5h-3zM344 452h3V474.0h-3zM395 452h3V474.0h-3zM414 452h3V467.6h-3zM443 452h3V474.0h-3zM466 452h3V472.4h-3zM465 452h3V466.4h-3zM495 452h3V474.0h-3zM494 452h5V464.0h-5zM515 452h3V474.0h-3zM514 452h5V464.0h-5zM545 452h3V469.3h-3zM594 452h3V474.0h-3zM643 452h3V465.4h-3zM645 452h3V474.0h-3zM663 452h3V470.9h-3zM666 452h3V468.4h-3zM694 452h3V474.0h-3zM693 452h5V464.0h-5zM696 452h3V464.2h-3zM717 452h3V472.7h-3zM722 452h3V470.0h-3zM765 452h3V474.0h-3zM764 452h5V464.0h-5zM795 452h3V474.0h-3zM794 452h5V464.0h-5zM816 452h3V466.4h-3zM844 452h3V468.4h-3zM914 452h3V474.0h-3zM913 452h5V464.0h-5zM915 452h3V474.0h-3zM945 452h3V474.0h-3zM944 452h5V464.0h-5zM986 452h3V471.2h-3zM994 452h3V474.0h-3zM993 452h5V462.9h-5zM996 452h3V465.5h-3zM1016 452h3V474.0h-3zM1015 452h5V464.0h-5z" fill="#c4c4f2"/>
<path d="M44.5 372.5V446M45.5 404.0V446M65.5 358.6V446M37.5 431.0V446M93.5 410.6V446M117.5 412.0V446M147.5 402.0V446M137.5 432.0V446M144.5 430.6V446M167.5 381.7V446M200.5 431.0V446M215.5 410.6V446M197.5 434.0V446M315.5 245.4V446M343.5 372.0V446M368.5 400.0V446M416.5 377.7V446M297.5 410.0V446M243.5 426.0V446M294.5 432.0V446M287.5 435.5V446M311.5 432.0V446M317.5 425.0V446M393.5 428.0V446M367.5 428.5V446M345.5 433.0V446M268.5 439.0V446M445.5 332.5V446M466.5 382.0V446M465.5 400.0V446M437.5 433.7V446M473.5 433.0V446M518.5 426.0V446M544.5 421.0V446M563.5 400.0V446M567.5 398.0V446M573.5 396.0V446M564.5 429.0V446M595.5 406.0V446M616.5 429.0V446M561.5 432.0V446M623.5 415.5V446M643.5 409.4V446M645.5 416.0V446M666.5 420.0V446M687.5 426.0V446M694.5 426.0V446M717.5 418.0V446M744.5 372.0V446M747.5 422.0V446M737.5 434.6V446M793.5 415.5V446M795.5 430.0V446M815.5 339.0V446M815.5 400.0V446M817.5 410.0V446M811.5 430.6V446M843.5 428.0V446M867.5 408.5V446M893.5 392.5V446M895.5 427.0V446M897.5 433.0V446M917.5 384.5V446M943.5 431.0V446M946.5 437.0V446M950.5 436.0V446M968.5 365.0V446M967.5 413.0V446M966.5 428.0V446M996.5 409.0V446M1017.5 425.0V446M44.5 452V495.8M66.5 452V518.0M96.5 452V586.5M94.5 452V494.0M145.5 452V613.6M165.5 452V565.6M167.5 452V491.0M193.5 452V519.0M195.5 452V503.0M216.5 452V502.5M62.5 452V468.0M38.5 452V462.0M87.5 452V465.0M116.5 452V465.0M187.5 452V467.0M206.5 452V462.0M237.5 452V518.0M246.5 452V497.0M266.5 452V606.5M295.5 452V588.7M316.5 452V493.6M322.5 452V493.6M345.5 452V541.0M387.5 452V487.5M396.5 452V528.0M415.5 452V504.0M273.5 452V468.0M366.5 452V463.0M373.5 452V464.0M406.5 452V462.5M444.5 452V541.0M467.5 452V520.0M466.5 452V500.0M496.5 452V552.7M494.5 452V482.0M516.5 452V629.0M537.5 452V477.0M546.5 452V509.6M565.5 452V488.0M573.5 452V466.5M587.5 452V471.0M595.5 452V532.7M617.5 452V479.0M623.5 452V472.0M644.5 452V496.7M646.5 452V542.0M664.5 452V515.0M667.5 452V506.5M695.5 452V565.0M697.5 452V492.7M718.5 452V521.0M723.5 452V512.0M743.5 452V476.0M766.5 452V639.5M794.5 452V489.6M796.5 452V612.7M787.5 452V469.6M817.5 452V500.0M662.5 452V469.6M823.5 452V469.6M837.5 452V479.0M845.5 452V506.5M866.5 452V467.0M887.5 452V463.5M895.5 452V473.0M900.5 452V470.0M915.5 452V579.0M916.5 452V532.7M946.5 452V615.0M944.5 452V473.0M968.5 452V469.0M973.5 452V480.0M987.5 452V516.0M995.5 452V543.0M997.5 452V497.0M1017.5 452V639.5M1017.5 452V466.5" stroke="#a0a0ee" stroke-width="1" fill="none"/>
<path d="M24.5 444V454M25.5 444V455M26.5 444V455M27.5 444V454M28.5 444V454M29.5 443V455M30.5 444V455M31.5 444V454M32.5 444V454M33.5 444V455M34.5 443V454M35.5 444V454M36.5 444V455M37.5 444V455M38.5 444V454M39.5 444V454M40.5 444V455M41.5 443V455M42.5 444V454M43.5 444V454M44.5 443V454M45.5 444V454M46.5 444V454M47.5 444V454M48.5 444V454M49.5 444V454M50.5 444V454M51.5 444V454M52.5 444V455M53.5 444V455M54.5 444V455M55.5 444V454M56.5 443V454M57.5 443V454M58.5 444V454M59.5 443V454M60.5 444V454M61.5 444V454M62.5 444V455M63.5 444V455M64.5 444V454M65.5 444V455M66.5 444V454M67.5 444V454M68.5 444V454M69.5 444V454M70.5 444V455M71.5 443V454M72.5 444V454M73.5 443V454M74.5 444V454M75.5 443V454M76.5 444V455M77.5 443V454M78.5 444V455M79.5 443V454M80.5 444V454M81.5 444V454M82.5 444V454M83.5 444V454M84.5 443V454M85.5 443V454M86.5 444V454M87.5 443V454M88.5 444V455M89.5 444V455M90.5 443V455M91.5 444V454M92.5 444V454M93.5 444V454M94.5 444V455M95.5 444V454M96.5 444V454M97.5 443V455M98.5 444V455M99.5 444V454M100.5 443V454M101.5 444V454M102.5 443V454M103.5 444V454M104.5 444V455M105.5 444V455M106.5 444V454M107.5 443V455M108.5 444V454M109.5 444V455M110.5 444V454M111.5 444V454M112.5 443V454M113.5 444V455M114.5 444V454M115.5 444V455M116.5 444V454M117.5 444V454M118.5 444V455M119.5 444V454M120.5 444V454M121.5 444V455M122.5 444V454M123.5 444V454M124.5 444V455M125.5 444V455M126.5 444V455M127.5 444V455M128.5 444V454M129.5 444V454M130.5 444V454M131.5 444V455M132.5 444V454M133.5 444V454M134.5 444V454M135.5 444V454M136.5 444V454M137.5 444V454M138.5 443V454M139.5 444V454M140.5 444V454M141.5 444V455M142.5 444V454M143.5 444V454M144.5 443V454M145.5 444V455M146.5 444V454M147.5 443V454M148.5 444V455M149.5 443V454M150.5 444V454M151.5 444V454M152.5 444V454M153.5 444V455M154.5 444V454M155.5 444V454M156.5 443V454M157.5 443V454M158.5 443V454M159.5 443V454M160.5 444V455M161.5 444V454M162.5 444V454M163.5 443V454M164.5 444V454M165.5 444V454M166.5 444V454M167.5 444V455M168.5 443V454M169.5 444V454M170.5 444V454M171.5 444V454M172.5 444V454M173.5 443V454M174.5 444V454M175.5 443V454M176.5 444V454M177.5 443V454M178.5 443V454M179.5 444V454M180.5 443V454M181.5 444V454M182.5 443V455M183.5 444V454M184.5 444V454M185.5 444V454M186.5 444V455M187.5 444V455M188.5 444V455M189.5 443V454M190.5 444V454M191.5 443V454M192.5 444V455M193.5 444V454M194.5 444V455M195.5 444V454M196.5 444V454M197.5 444V455M198.5 444V454M199.5 444V454M200.5 444V454M201.5 444V454M202.5 444V454M203.5 444V455M204.5 443V455M205.5 444V454M206.5 444V454M207.5 444V454M208.5 444V454M209.5 444V455M210.5 443V455M211.5 444V454M212.5 444V454M213.5 444V455M214.5 443V454M215.5 444V455M216.5 443V454M217.5 444V454M218.5 444V454M219.5 444V454M220.5 444V454M221.5 444V454M222.5 444V455M223.5 444V454M224.5 443V455M225.5 444V454M226.5 443V454M227.5 444V454M228.5 444V455M229.5 444V454M230.5 444V454M231.5 444V454M232.5 444V454M233.5 444V454M234.5 443V454M235.5 443V454M236.5 444V454M237.5 443V454M238.5 444V454M239.5 444V455M240.5 443V455M241.5 444V455M242.5 444V455M243.5 444V454M244.5 444V454M245.5 444V454M246.5 444V454M247.5 444V455M248.5 444V454M249.5 444V454M250.5 444V454M251.5 444V454M252.5 443V454M253.5 444V454M254.5 443V454M255.5 444V454M256.5 444V454M257.5 444V455M258.5 443V454M259.5 443V454M260.5 444V454M261.5 443V454M262.5 444V454M263.5 444V454M264.5 444V455M265.5 444V455M266.5 444V454M267.5 444V454M268.5 444V454M269.5 444V454M270.5 444V454M271.5 444V454M272.5 444V454M273.5 443V454M274.5 444V454M275.5 444V455M276.5 444V454M277.5 444V454M278.5 444V454M279.5 444V454M280.5 444V454M281.5 443V454M282.5 444V454M283.5 444V455M284.5 444V455M285.5 444V454M286.5 444V454M287.5 444V454M288.5 444V454M289.5 444V454M290.5 444V455M291.5 444V454M292.5 444V455M293.5 444V455M294.5 444V454M295.5 444V454M296.5 444V454M297.5 444V454M298.5 443V454M299.5 444V454M300.5 444V455M301.5 443V454M302.5 444V454M303.5 444V454M304.5 444V455M305.5 444V455M306.5 444V454M307.5 444V455M308.5 444V455M309.5 443V454M310.5 444V454M311.5 444V454M312.5 444V454M313.5 444V454M314.5 443V455M315.5 444V455M316.5 444V455M317.5 444V454M318.5 444V455M319.5 444V455M320.5 444V455M321.5 444V454M322.5 444V454M323.5 444V454M324.5 444V454M325.5 444V454M326.5 443V454M327.5 444V454M328.5 443V454M329.5 444V455M330.5 444V454M331.5 444V454M332.5 444V455M333.5 444V454M334.5 444V455M335.5 443V455M336.5 443V454M337.5 444V454M338.5 444V454M339.5 444V454M340.5 444V454M341.5 443V455M342.5 444V454M343.5 444V454M344.5 444V455M345.5 444V454M346.5 443V454M347.5 444V454M348.5 443V455M349.5 443V455M350.5 443V454M351.5 444V454M352.5 444V454M353.5 443V454M354.5 444V454M355.5 444V454M356.5 444V454M357.5 444V454M358.5 444V454M359.5 444V454M360.5 444V454M361.5 444V454M362.5 444V454M363.5 444V454M364.5 444V454M365.5 443V454M366.5 443V455M367.5 444V454M368.5 443V454M369.5 444V455M370.5 443V454M371.5 444V455M372.5 444V455M373.5 444V454M374.5 443V454M375.5 444V454M376.5 444V455M377.5 443V454M378.5 444V455M379.5 444V454M380.5 444V455M381.5 444V454M382.5 444V454M383.5 443V454M384.5 444V454M385.5 443V454M386.5 443V454M387.5 443V455M388.5 443V455M389.5 444V454M390.5 443V454M391.5 444V454M392.5 444V454M393.5 444V454M394.5 444V454M395.5 444V454M396.5 443V454M397.5 444V454M398.5 443V455M399.5 444V454M400.5 443V454M401.5 443V454M402.5 444V454M403.5 444V454M404.5 444V454M405.5 444V454M406.5 444V454M407.5 443V454M408.5 444V454M409.5 444V454M410.5 444V454M411.5 443V454M412.5 444V454M413.5 444V454M414.5 444V454M415.5 443V454M416.5 444V454M417.5 444V455M418.5 444V454M419.5 443V454M420.5 444V454M421.5 443V454M422.5 444V455M423.5 444V454M424.5 443V454M425.5 444V454M426.5 443V454M427.5 444V455M428.5 444V454M429.5 444V454M430.5 444V454M431.5 443V454M432.5 443V455M433.5 444V454M434.5 444V454M435.5 443V454M436.5 443V454M437.5 444V454M438.5 444V454M439.5 443V454M440.5 444V454M441.5 443V454M442.5 444V454M443.5 443V454M444.5 444V454M445.5 443V454M446.5 444V454M447.5 444V454M448.5 444V454M449.5 444V455M450.5 444V454M451.5 444V454M452.5 443V454M453.5 443V454M454.5 444V454M455.5 443V455M456.5 443V454M457.5 444V455M458.5 444V454M459.5 444V455M460.5 443V454M461.5 443V455M462.5 444V454M463.5 444V454M464.5 443V455M465.5 444V454M466.5 444V455M467.5 444V454M468.5 444V455M469.5 444V454M470.5 444V454M471.5 443V454M472.5 444V455M473.5 444V454M474.5 444V455M475.5 444V454M476.5 444V454M477.5 443V454M478.5 444V454M479.5 444V454M480.5 444V454M481.5 444V454M482.5 444V454M483.5 444V454M484.5 444V454M485.5 444V454M486.5 444V454M487.5 443V454M488.5 444V454M489.5 444V454M490.5 444V454M491.5 444V455M492.5 444V455M493.5 444V454M494.5 443V454M495.5 444V455M496.5 444V455M497.5 443V454M498.5 443V455M499.5 443V454M500.5 444V454M501.5 444V454M502.5 444V454M503.5 444V454M504.5 443V454M505.5 444V454M506.5 444V455M507.5 444V455M508.5 444V455M509.5 444V455M510.5 444V454M511.5 444V454M512.5 443V454M513.5 444V455M514.5 443V454M515.5 444V454M516.5 444V454M517.5 444V454M518.5 444V454M519.5 444V454M520.5 443V455M521.5 443V454M522.5 444V454M523.5 443V455M524.5 444V454M525.5 443V454M526.5 444V454M527.5 444V454M528.5 443V454M529.5 444V454M530.5 444V454M531.5 444V454M532.5 444V454M533.5 444V454M534.5 443V455M535.5 444V454M536.5 444V454M537.5 444V454M538.5 444V454M539.5 444V455M540.5 444V455M541.5 444V454M542.5 444V455M543.5 443V454M544.5 444V454M545.5 444V454M546.5 443V455M547.5 444V454M548.5 443V454M549.5 444V454M550.5 444V454M551.5 444V455M552.5 444V454M553.5 444V454M554.5 444V454M555.5 444V454M556.5 444V454M557.5 444V454M558.5 443V454M559.5 444V454M560.5 443V454M561.5 443V454M562.5 444V454M563.5 444V454M564.5 444V454M565.5 444V454M566.5 444V454M567.5 443V454M568.5 444V454M569.5 444V454M570.5 444V454M571.5 444V455M572.5 443V454M573.5 444V454M574.5 444V454M575.5 444V455M576.5 444V454M577.5 444V454M578.5 444V454M579.5 443V454M580.5 444V454M581.5 443V454M582.5 444V454M583.5 444V454M584.5 444V454M585.5 443V455M586.5 444V454M587.5 444V455M588.5 444V454M589.5 444V454M590.5 444V454M591.5 443V454M592.5 444V454M593.5 444V454M594.5 443V455M595.5 444V454M596.5 444V454M597.5 444V454M598.5 444V454M599.5 444V454M600.5 444V454M601.5 444V455M602.5 444V455M603.5 444V455M604.5 443V455M605.5 444V454M606.5 443V455M607.5 443V454M608.5 443V454M609.5 444V454M610.5 444V454M611.5 444V454M612.5 444V454M613.5 444V454M614.5 444V454M615.5 444V454M616.5 444V455M617.5 444V454M618.5 444V455M619.5 444V454M620.5 444V454M621.5 444V454M622.5 444V454M623.5 443V454M624.5 443V454M625.5 444V454M626.5 443V454M627.5 444V454M628.5 444V454M629.5 444V454M630.5 444V454M631.5 443V455M632.5 444V454M633.5 444V455M634.5 443V454M635.5 444V454M636.5 443V454M637.5 444V454M638.5 444V454M639.5 444V454M640.5 444V454M641.5 444V454M642.5 444V454M643.5 444V455M644.5 444V454M645.5 444V454M646.5 443V455M647.5 444V454M648.5 444V455M649.5 444V454M650.5 444V454M651.5 444V454M652.5 443V454M653.5 443V454M654.5 444V454M655.5 444V454M656.5 444V455M657.5 443V454M658.5 444V454M659.5 444V454M660.5 444V455M661.5 444V455M662.5 444V454M663.5 444V454M664.5 444V455M665.5 443V455M666.5 444V454M667.5 443V454M668.5 444V454M669.5 443V455M670.5 444V454M671.5 444V454M672.5 444V454M673.5 444V454M674.5 444V455M675.5 443V454M676.5 444V454M677.5 444V455M678.5 444V454M679.5 444V455M680.5 444V454M681.5 444V455M682.5 444V454M683.5 444V455M684.5 444V454M685.5 444V454M686.5 443V455M687.5 444V454M688.5 444V454M689.5 444V454M690.5 444V455M691.5 443V455M692.5 444V455M693.5 444V454M694.5 444V455M695.5 444V454M696.5 444V454M697.5 444V454M698.5 444V454M699.5 444V454M700.5 444V454M701.5 443V454M702.5 444V455M703.5 444V454M704.5 444V454M705.5 443V454M706.5 444V454M707.5 443V454M708.5 444V454M709.5 444V455M710.5 444V454M711.5 444V454M712.5 444V454M713.5 444V454M714.5 444V454M715.5 444V454M716.5 443V454M717.5 444V454M718.5 444V455M719.5 444V454M720.5 443V454M721.5 444V454M722.5 444V455M723.5 444V454M724.5 444V454M725.5 443V454M726.5 444V455M727.5 444V454M728.5 444V454M729.5 443V454M730.5 444V454M731.5 444V454M732.5 444V454M733.5 444V454M734.5 444V454M735.5 443V454M736.5 444V454M737.5 444V454M738.5 444V455M739.5 444V455M740.5 444V454M741.5 444V454M742.5 444V454M743.5 444V455M744.5 443V454M745.5 444V454M746.5 443V455M747.5 444V454M748.5 444V454M749.5 444V454M750.5 444V455M751.5 444V454M752.5 444V454M753.5 444V455M754.5 443V454M755.5 444V454M756.5 444V454M757.5 444V454M758.5 444V454M759.5 444V454M760.5 444V454M761.5 443V454M762.5 443V454M763.5 444V454M764.5 444V454M765.5 444V454M766.5 444V454M767.5 444V454M768.5 444V454M769.5 444V454M770.5 443V454M771.5 444V455M772.5 443V454M773.5 444V454M774.5 444V455M775.5 444V455M776.5 444V454M777.5 444V454M778.5 444V454M779.5 444V454M780.5 443V455M781.5 443V454M782.5 443V455M783.5 444V455M784.5 444V454M785.5 444V454M786.5 444V454M787.5 444V454M788.5 443V454M789.5 443V454M790.5 443V454M791.5 444V454M792.5 444V454M793.5 444V454M794.5 444V454M795.5 444V454M796.5 444V454M797.5 444V455M798.5 443V455M799.5 443V455M800.5 443V454M801.5 444V454M802.5 444V454M803.5 444V455M804.5 444V455M805.5 444V454M806.5 444V454M807.5 444V454M808.5 444V455M809.5 444V454M810.5 444V454M811.5 444V455M812.5 444V454M813.5 443V455M814.5 443V454M815.5 444V454M816.5 443V455M817.5 443V454M818.5 444V454M819.5 444V454M820.5 444V454M821.5 444V454M822.5 444V455M823.5 444V454M824.5 444V454M825.5 443V454M826.5 444V455M827.5 444V454M828.5 444V455M829.5 444V454M830.5 444V454M831.5 444V454M832.5 444V455M833.5 444V455M834.5 444V454M835.5 443V454M836.5 443V454M837.5 443V455M838.5 444V454M839.5 444V455M840.5 444V454M841.5 444V455M842.5 443V454M843.5 444V454M844.5 444V455M845.5 444V454M846.5 443V454M847.5 444V454M848.5 444V454M849.5 444V454M850.5 444V454M851.5 444V454M852.5 444V454M853.5 443V454M854.5 444V454M855.5 444V454M856.5 443V454M857.5 444V454M858.5 444V455M859.5 444V455M860.5 443V454M861.5 443V455M862.5 443V455M863.5 444V455M864.5 443V455M865.5 444V455M866.5 444V455M867.5 444V454M868.5 443V455M869.5 443V454M870.5 443V454M871.5 444V454M872.5 444V455M873.5 444V454M874.5 444V454M875.5 444V455M876.5 443V454M877.5 444V455M878.5 444V454M879.5 444V455M880.5 443V454M881.5 443V454M882.5 444V454M883.5 443V454M884.5 444V455M885.5 444V454M886.5 444V454M887.5 444V455M888.5 444V454M889.5 443V454M890.5 444V454M891.5 444V454M892.5 444V454M893.5 444V455M894.5 444V454M895.5 444V454M896.5 444V455M897.5 444V455M898.5 444V454M899.5 444V454M900.5 444V454M901.5 444V455M902.5 444V454M903.5 443V455M904.5 444V454M905.5 444V454M906.5 444V454M907.5 444V454M908.5 444V454M909.5 444V454M910.5 443V454M911.5 444V455M912.5 444V454M913.5 444V455M914.5 444V455M915.5 443V454M916.5 444V454M917.5 444V454M918.5 444V454M919.5 444V455M920.5 444V455M921.5 444V454M922.5 444V454M923.5 443V455M924.5 443V454M925.5 443V454M926.5 444V455M927.5 444V454M928.5 444V454M929.5 444V454M930.5 443V454M931.5 444V454M932.5 443V454M933.5 444V454M934.5 444V454M935.5 444V454M936.5 443V454M937.5 444V454M938.5 444V454M939.5 444V454M940.5 444V454M941.5 444V454M942.5 444V454M943.5 443V454M944.5 444V454M945.5 443V454M946.5 444V454M947.5 444V454M948.5 444V454M949.5 443V454M950.5 444V454M951.5 444V454M952.5 444V454M953.5 444V454M954.5 443V454M955.5 444V454M956.5 444V454M957.5 444V454M958.5 444V454M959.5 443V454M960.5 444V454M961.5 443V454M962.5 444V455M963.5 443V454M964.5 444V454M965.5 443V454M966.5 444V455M967.5 444V454M968.5 444V455M969.5 444V454M970.5 444V454M971.5 444V454M972.5 444V454M973.5 444V454M974.5 444V455M975.5 444V454M976.5 444V454M977.5 443V454M978.5 444V454M979.5 444V454M980.5 443V454M981.5 444V455M982.5 444V454M983.5 443V455M984.5 444V454M985.5 444V454M986.5 444V455M987.5 444V455M988.5 444V455M989.5 444V454M990.5 443V455M991.5 444V454M992.5 444V454M993.5 444V454M994.5 443V454M995.5 444V454M996.5 444V454M997.5 444V454M998.5 443V454M999.5 443V454M1000.5 444V454M1001.5 444V455M1002.5 444V454M1003.5 444V454M1004.5 444V454M1005.5 444V454M1006.5 444V455M1007.5 444V455M1008.5 443V454M1009.5 444V455M1010.5 443V454M1011.5 444V454M1012.5 444V454M1013.5 444V454M1014.5 443V454M1015.5 444V454M1016.5 443V454M1017.5 444V454M1018.5 443V454M1019.5 443V454M1020.5 443V455M1021.5 444V455" stroke="#0c0cc0" stroke-width="1" fill="none"/>
<path d="M25.5 449v1M26.5 446v3M30.5 445v1M34.5 448v2M38.5 445v1M41.5 445v1M43.5 447v2M46.5 449v1M49.5 449v2M50.5 449v2M51.5 448v3M54.5 446v1M57.5 449v1M58.5 450v2M59.5 448v1M60.5 449v3M66.5 445v2M69.5 447v2M71.5 445v2M75.5 445v3M77.5 451v3M80.5 447v2M81.5 448v1M84.5 449v3M89.5 451v1M93.5 449v1M101.5 451v2M104.5 447v2M107.5 445v2M112.5 445v1M113.5 445v3M116.5 448v3M119.5 446v2M120.5 449v2M122.5 448v3M123.5 449v3M126.5 447v3M128.5 447v2M131.5 451v3M133.5 445v2M137.5 449v1M138.5 451v1M140.5 445v2M145.5 447v2M147.5 445v1M151.5 449v3M152.5 448v1M153.5 446v3M158.5 447v2M160.5 445v3M162.5 447v3M168.5 451v3M170.5 445v1M172.5 445v1M180.5 446v3M181.5 451v3M184.5 446v3M185.5 451v3M186.5 451v3M188.5 451v2M189.5 449v1M191.5 448v1M193.5 446v1M197.5 446v2M198.5 446v1M200.5 450v1M202.5 451v2M205.5 450v3M206.5 451v2M215.5 448v3M218.5 451v3M219.5 445v3M220.5 446v1M224.5 446v3M228.5 450v2M232.5 447v3M238.5 448v3M241.5 448v1M247.5 451v2M251.5 448v1M252.5 447v2M256.5 451v2M259.5 450v2M264.5 447v3M265.5 450v1M266.5 446v2M272.5 448v3M273.5 451v2M278.5 449v1M280.5 445v3M281.5 450v2M284.5 445v3M285.5 447v2M287.5 445v2M297.5 449v3M299.5 448v3M312.5 447v1M317.5 447v3M324.5 446v2M330.5 447v2M333.5 447v3M334.5 447v2M335.5 448v3M337.5 451v1M338.5 450v3M340.5 450v2M342.5 451v2M347.5 447v3M348.5 449v1M352.5 447v1M353.5 450v2M359.5 448v2M362.5 446v3M375.5 450v2M378.5 446v3M381.5 450v2M384.5 446v3M385.5 447v1M387.5 446v3M397.5 446v1M398.5 446v3M399.5 446v2M405.5 448v2M406.5 449v2M407.5 447v3M409.5 450v3M411.5 447v1M413.5 449v2M418.5 447v1M420.5 451v1M421.5 450v2M422.5 445v1M425.5 449v3M426.5 445v1M427.5 450v3M428.5 446v1M429.5 445v2M436.5 450v3M438.5 449v2M439.5 446v1M440.5 446v1M446.5 449v1M447.5 447v2M450.5 451v3M454.5 450v2M457.5 447v1M458.5 448v2M459.5 447v1M461.5 450v3M470.5 451v3M471.5 449v3M472.5 447v1M475.5 446v3M476.5 447v1M480.5 445v1M485.5 449v3M486.5 449v3M487.5 451v1M491.5 451v3M498.5 446v1M499.5 448v2M501.5 447v3M502.5 446v2M506.5 451v3M507.5 447v1M508.5 451v3M510.5 449v2M518.5 449v3M522.5 445v3M525.5 445v3M527.5 448v3M530.5 451v3M535.5 449v1M538.5 447v2M541.5 447v3M542.5 451v2M543.5 449v3M545.5 449v1M548.5 446v1M549.5 445v2M552.5 451v1M562.5 449v2M564.5 445v3M569.5 445v3M572.5 446v1M578.5 450v1M579.5 450v2M580.5 449v3M583.5 449v2M584.5 445v1M586.5 449v1M589.5 446v1M590.5 445v2M592.5 451v2M593.5 451v2M594.5 448v1M596.5 450v2M599.5 448v1M600.5 451v1M601.5 448v2M602.5 448v1M609.5 451v1M611.5 446v1M613.5 445v2M615.5 445v1M619.5 450v3M621.5 451v3M627.5 451v3M629.5 451v3M641.5 449v3M644.5 445v1M648.5 447v3M649.5 446v2M656.5 450v2M657.5 446v3M660.5 451v2M661.5 445v3M664.5 447v1M674.5 448v1M675.5 446v1M676.5 446v2M677.5 451v3M678.5 450v3M684.5 446v3M688.5 449v2M689.5 448v1M690.5 447v1M691.5 448v3M695.5 451v3M696.5 451v3M697.5 447v2M702.5 447v1M708.5 450v1M711.5 449v3M715.5 445v1M716.5 447v2M718.5 445v1M722.5 446v1M723.5 445v2M724.5 450v3M728.5 445v3M730.5 451v2M732.5 445v3M733.5 448v1M735.5 447v3M743.5 446v2M746.5 447v2M751.5 449v1M752.5 450v2M755.5 450v2M757.5 449v3M759.5 448v1M762.5 446v1M765.5 446v2M767.5 446v2M768.5 447v1M769.5 450v1M771.5 450v3M773.5 446v2M774.5 451v3M777.5 447v3M778.5 451v1M784.5 450v1M785.5 451v3M786.5 446v2M787.5 446v1M788.5 448v2M791.5 449v3M792.5 447v3M795.5 451v2M796.5 451v3M798.5 448v3M802.5 448v3M804.5 445v1M805.5 447v2M811.5 449v3M818.5 449v2M821.5 448v1M822.5 446v2M825.5 448v1M829.5 450v3M830.5 447v3M831.5 448v1M833.5 449v2M836.5 445v2M837.5 449v2M843.5 451v1M850.5 445v1M853.5 449v2M856.5 445v1M859.5 447v2M861.5 450v3M862.5 450v1M865.5 449v2M867.5 446v2M868.5 445v3M869.5 450v3M874.5 445v1M891.5 447v1M892.5 447v2M894.5 446v2M895.5 446v1M897.5 447v1M899.5 448v1M900.5 449v3M907.5 445v3M910.5 449v2M912.5 446v2M914.5 449v3M921.5 448v3M923.5 449v3M924.5 450v2M925.5 450v3M926.5 448v3M927.5 451v3M928.5 446v1M942.5 448v2M947.5 448v3M948.5 447v2M950.5 447v2M952.5 446v2M953.5 447v1M962.5 448v3M963.5 445v2M969.5 445v1M970.5 450v2M977.5 445v2M978.5 447v1M982.5 451v2M983.5 445v3M985.5 448v2M986.5 446v1M987.5 448v2M993.5 446v3M995.5 446v2M997.5 448v3M999.5 447v3M1005.5 447v3M1006.5 451v2M1007.5 445v2M1008.5 450v1M1016.5 449v2M1018.5 451v1M1020.5 450v3M1021.5 448v1" stroke="#2a2ae8" stroke-width="1" fill="none"/>
<path d="M24.5 454v1M25.5 455v1M26.5 443v1M26.5 454v1M29.5 454v1M31.5 444v1M33.5 455v1M35.5 443v1M36.5 454v1M38.5 443v1M38.5 454v1M41.5 455v1M42.5 454v1M44.5 444v1M45.5 444v1M47.5 455v1M51.5 443v1M51.5 454v1M56.5 443v1M56.5 454v1M57.5 455v1M60.5 443v1M61.5 444v1M61.5 454v1M64.5 454v1M65.5 444v1M66.5 443v1M67.5 444v1M68.5 444v1M68.5 455v1M69.5 443v1M71.5 443v1M72.5 443v1M72.5 454v1M73.5 454v1M74.5 444v1M75.5 443v1M76.5 444v1M76.5 455v1M79.5 444v1M80.5 443v1M80.5 455v1M81.5 444v1M81.5 454v1M82.5 455v1M83.5 454v1M86.5 443v1M86.5 455v1M89.5 443v1M90.5 455v1M94.5 444v1M94.5 455v1M95.5 455v1M96.5 455v1M97.5 455v1M98.5 443v1M100.5 454v1M103.5 444v1M104.5 443v1M104.5 455v1M106.5 444v1M107.5 443v1M107.5 454v1M109.5 443v1M110.5 443v1M111.5 444v1M112.5 444v1M113.5 443v1M113.5 454v1M115.5 443v1M115.5 455v1M116.5 454v1M117.5 444v1M117.5 454v1M118.5 444v1M120.5 455v1M125.5 454v1M126.5 444v1M126.5 455v1M127.5 444v1M127.5 454v1M128.5 443v1M130.5 455v1M131.5 455v1M133.5 455v1M135.5 444v1M136.5 455v1M137.5 454v1M139.5 443v1M142.5 444v1M142.5 454v1M146.5 455v1M148.5 454v1M150.5 444v1M151.5 455v1M153.5 455v1M157.5 444v1M159.5 443v1M159.5 455v1M161.5 444v1M161.5 454v1M163.5 444v1M163.5 455v1M164.5 444v1M164.5 455v1M165.5 443v1M168.5 443v1M168.5 455v1M169.5 455v1M170.5 443v1M173.5 443v1M174.5 444v1M175.5 443v1M175.5 454v1M176.5 443v1M176.5 454v1M177.5 454v1M179.5 443v1M179.5 455v1M180.5 443v1M180.5 454v1M181.5 444v1M184.5 443v1M184.5 454v1M185.5 455v1M186.5 443v1M186.5 454v1M187.5 443v1M188.5 444v1M188.5 455v1M189.5 455v1M191.5 454v1M197.5 443v1M199.5 443v1M200.5 443v1M200.5 454v1M202.5 444v1M203.5 444v1M208.5 454v1M210.5 443v1M211.5 444v1M211.5 454v1M212.5 444v1M213.5 454v1M214.5 455v1M219.5 454v1M220.5 455v1M223.5 443v1M227.5 443v1M234.5 443v1M234.5 455v1M238.5 454v1M239.5 454v1M240.5 444v1M242.5 443v1M243.5 454v1M246.5 454v1M250.5 443v1M252.5 454v1M258.5 443v1M258.5 455v1M259.5 444v1M261.5 444v1M263.5 444v1M265.5 443v1M266.5 455v1M273.5 444v1M273.5 454v1M275.5 454v1M276.5 455v1M278.5 455v1M280.5 443v1M282.5 444v1M282.5 455v1M283.5 455v1M285.5 443v1M285.5 454v1M286.5 443v1M286.5 455v1M288.5 444v1M292.5 454v1M293.5 454v1M294.5 444v1M296.5 443v1M297.5 455v1M300.5 444v1M301.5 444v1M301.5 455v1M302.5 455v1M303.5 443v1M303.5 454v1M307.5 454v1M308.5 454v1M309.5 455v1M313.5 444v1M313.5 455v1M314.5 455v1M317.5 444v1M319.5 443v1M320.5 443v1M321.5 444v1M322.5 454v1M323.5 444v1M326.5 444v1M327.5 443v1M328.5 455v1M330.5 444v1M332.5 444v1M333.5 454v1M339.5 454v1M340.5 444v1M340.5 455v1M342.5 455v1M343.5 444v1M344.5 443v1M345.5 455v1M346.5 455v1M347.5 455v1M350.5 454v1M352.5 444v1M353.5 455v1M354.5 454v1M356.5 444v1M356.5 454v1M357.5 455v1M358.5 455v1M360.5 455v1M361.5 443v1M361.5 455v1M362.5 444v1M364.5 444v1M366.5 443v1M367.5 444v1M367.5 454v1M368.5 443v1M369.5 444v1M373.5 455v1M375.5 454v1M376.5 443v1M377.5 454v1M380.5 443v1M382.5 444v1M386.5 455v1M389.5 454v1M391.5 443v1M394.5 454v1M396.5 444v1M399.5 443v1M401.5 455v1M402.5 455v1M403.5 443v1M404.5 444v1M406.5 444v1M410.5 444v1M412.5 443v1M413.5 443v1M416.5 443v1M416.5 455v1M418.5 444v1M419.5 444v1M419.5 454v1M420.5 455v1M425.5 454v1M426.5 455v1M427.5 443v1M429.5 444v1M429.5 454v1M430.5 443v1M445.5 454v1M447.5 455v1M449.5 455v1M450.5 443v1M451.5 455v1M452.5 444v1M455.5 443v1M456.5 455v1M458.5 455v1M460.5 454v1M461.5 455v1M463.5 454v1M465.5 443v1M466.5 444v1M467.5 454v1M468.5 454v1M471.5 455v1M473.5 444v1M473.5 455v1M474.5 444v1M475.5 443v1M477.5 454v1M478.5 454v1M480.5 444v1M481.5 454v1M482.5 454v1M483.5 443v1M484.5 455v1M485.5 454v1M486.5 444v1M487.5 444v1M488.5 454v1M490.5 443v1M493.5 444v1M496.5 455v1M497.5 444v1M498.5 454v1M499.5 443v1M500.5 443v1M501.5 455v1M502.5 454v1M507.5 444v1M508.5 444v1M511.5 443v1M512.5 455v1M514.5 444v1M517.5 455v1M519.5 443v1M521.5 454v1M522.5 443v1M523.5 444v1M524.5 443v1M525.5 444v1M527.5 443v1M527.5 455v1M530.5 454v1M531.5 455v1M535.5 454v1M536.5 455v1M540.5 455v1M541.5 455v1M543.5 443v1M545.5 444v1M547.5 454v1M548.5 444v1M549.5 443v1M551.5 443v1M552.5 444v1M554.5 444v1M554.5 454v1M555.5 454v1M557.5 443v1M557.5 454v1M559.5 455v1M560.5 455v1M562.5 454v1M564.5 444v1M566.5 443v1M568.5 443v1M571.5 443v1M571.5 455v1M574.5 443v1M574.5 455v1M575.5 443v1M576.5 443v1M576.5 454v1M579.5 444v1M579.5 454v1M580.5 444v1M582.5 444v1M585.5 455v1M587.5 454v1M588.5 444v1M589.5 444v1M591.5 444v1M592.5 444v1M592.5 455v1M593.5 454v1M594.5 443v1M595.5 454v1M597.5 443v1M601.5 444v1M603.5 454v1M604.5 454v1M607.5 444v1M608.5 444v1M612.5 443v1M613.5 444v1M614.5 444v1M616.5 443v1M616.5 455v1M618.5 444v1M619.5 443v1M619.5 455v1M620.5 444v1M622.5 454v1M623.5 443v1M624.5 454v1M627.5 455v1M629.5 454v1M632.5 444v1M633.5 454v1M642.5 455v1M644.5 454v1M645.5 455v1M648.5 454v1M653.5 455v1M654.5 443v1M657.5 455v1M659.5 454v1M663.5 444v1M664.5 443v1M665.5 454v1M666.5 444v1M669.5 454v1M671.5 443v1M672.5 455v1M674.5 443v1M674.5 455v1M675.5 443v1M675.5 454v1M678.5 443v1M678.5 454v1M679.5 443v1M679.5 455v1M683.5 455v1M687.5 454v1M690.5 454v1M692.5 454v1M695.5 455v1M697.5 444v1M699.5 443v1M700.5 444v1M701.5 444v1M703.5 454v1M704.5 444v1M705.5 455v1M709.5 443v1M709.5 454v1M711.5 444v1M711.5 455v1M713.5 444v1M717.5 443v1M719.5 444v1M719.5 454v1M720.5 454v1M721.5 444v1M721.5 455v1M722.5 455v1M724.5 443v1M725.5 443v1M726.5 444v1M726.5 455v1M727.5 444v1M728.5 455v1M729.5 444v1M729.5 454v1M733.5 454v1M734.5 444v1M734.5 455v1M735.5 455v1M736.5 454v1M737.5 455v1M738.5 454v1M741.5 443v1M743.5 443v1M743.5 455v1M745.5 443v1M746.5 444v1M747.5 454v1M748.5 443v1M748.5 454v1M750.5 443v1M751.5 444v1M751.5 455v1M752.5 444v1M760.5 454v1M761.5 444v1M761.5 455v1M764.5 455v1M766.5 454v1M767.5 454v1M768.5 444v1M769.5 444v1M770.5 454v1M772.5 455v1M775.5 444v1M776.5 454v1M778.5 455v1M779.5 443v1M780.5 443v1M780.5 454v1M781.5 443v1M782.5 454v1M783.5 444v1M786.5 443v1M786.5 454v1M788.5 454v1M789.5 455v1M790.5 444v1M793.5 455v1M795.5 443v1M796.5 443v1M798.5 443v1M800.5 455v1M801.5 454v1M803.5 454v1M806.5 454v1M807.5 454v1M808.5 444v1M808.5 455v1M809.5 444v1M811.5 454v1M812.5 455v1M813.5 443v1M816.5 443v1M817.5 454v1M819.5 443v1M820.5 443v1M821.5 443v1M824.5 454v1M825.5 455v1M827.5 444v1M829.5 454v1M830.5 444v1M831.5 455v1M832.5 443v1M833.5 454v1M834.5 443v1M839.5 455v1M840.5 455v1M846.5 444v1M846.5 455v1M847.5 443v1M848.5 454v1M850.5 455v1M851.5 455v1M854.5 455v1M856.5 444v1M857.5 455v1M859.5 444v1M859.5 454v1M861.5 444v1M864.5 444v1M868.5 454v1M870.5 444v1M871.5 455v1M873.5 443v1M874.5 444v1M875.5 455v1M876.5 444v1M877.5 455v1M880.5 454v1M884.5 455v1M887.5 455v1M888.5 455v1M892.5 444v1M892.5 455v1M902.5 454v1M903.5 444v1M905.5 455v1M907.5 454v1M911.5 443v1M911.5 455v1M912.5 454v1M913.5 443v1M915.5 443v1M919.5 444v1M920.5 454v1M922.5 455v1M923.5 455v1M925.5 443v1M929.5 444v1M930.5 454v1M934.5 444v1M935.5 444v1M936.5 444v1M936.5 454v1M938.5 455v1M942.5 443v1M942.5 454v1M943.5 454v1M946.5 455v1M947.5 443v1M949.5 455v1M951.5 444v1M957.5 454v1M958.5 443v1M959.5 444v1M963.5 455v1M966.5 443v1M967.5 443v1M973.5 454v1M976.5 444v1M978.5 455v1M979.5 443v1M982.5 454v1M983.5 454v1M986.5 443v1M988.5 454v1M990.5 455v1M992.5 444v1M993.5 444v1M993.5 455v1M996.5 443v1M997.5 454v1M999.5 455v1M1000.5 454v1M1002.5 444v1M1002.5 454v1M1004.5 443v1M1004.5 455v1M1005.5 455v1M1008.5 454v1M1009.5 454v1M1013.5 443v1M1013.5 455v1M1015.5 444v1M1018.5 455v1M1019.5 454v1M1020.5 443v1M1020.5 455v1M1021.5 454v1" stroke="#5a5ad8" stroke-width="1" fill="none"/>
<path d="M24.5 454v1M26.5 439v6M31.5 454v3M34.5 444v1M53.5 454v3M65.5 454v6M68.5 440v5M69.5 454v3M78.5 454v3M82.5 454v4M84.5 454v6M92.5 441v4M95.5 454v5M96.5 454v6M97.5 442v3M112.5 454v6M114.5 440v5M121.5 443v2M124.5 444v1M135.5 441v4M139.5 444v1M141.5 454v6M142.5 454v2M143.5 441v4M144.5 454v6M149.5 443v2M178.5 454v2M184.5 439v6M186.5 454v6M195.5 454v1M196.5 454v6M205.5 441v4M208.5 454v5M210.5 454v3M236.5 444v1M248.5 454v1M252.5 454v1M260.5 440v5M265.5 454v3M269.5 454v1M274.5 454v1M276.5 454v3M278.5 443v2M281.5 441v4M290.5 454v1M293.5 440v5M314.5 443v2M317.5 454v3M320.5 444v1M325.5 440v5M328.5 454v6M331.5 442v3M338.5 439v6M339.5 454v3M341.5 444v1M344.5 454v5M352.5 454v6M365.5 443v2M371.5 454v5M373.5 454v5M374.5 443v2M379.5 439v6M385.5 454v6M386.5 443v2M389.5 442v3M390.5 454v3M391.5 444v1M398.5 442v3M403.5 454v5M408.5 443v2M410.5 454v6M420.5 454v5M421.5 454v4M422.5 454v2M434.5 454v3M442.5 442v3M446.5 440v5M447.5 454v1M455.5 443v2M456.5 454v4M464.5 439v6M465.5 454v6M466.5 454v6M468.5 441v4M471.5 439v6M474.5 442v3M476.5 454v1M480.5 440v5M486.5 444v1M487.5 454v2M490.5 454v3M504.5 454v4M506.5 442v3M508.5 454v4M514.5 454v1M531.5 454v6M533.5 443v2M538.5 454v6M539.5 443v2M541.5 454v6M542.5 443v2M548.5 454v6M551.5 440v5M556.5 454v3M559.5 454v3M560.5 443v2M564.5 443v2M566.5 454v5M569.5 442v3M577.5 454v2M583.5 454v5M585.5 442v3M590.5 442v3M592.5 441v4M595.5 454v4M596.5 444v1M611.5 439v6M612.5 440v5M613.5 440v5M617.5 454v2M620.5 441v4M627.5 440v5M629.5 444v1M634.5 454v6M636.5 454v5M642.5 454v6M651.5 454v1M658.5 454v5M667.5 454v5M669.5 441v4M675.5 439v6M681.5 443v2M688.5 454v4M696.5 444v1M704.5 454v3M711.5 439v6M717.5 454v5M723.5 454v6M725.5 454v1M727.5 444v1M729.5 454v6M739.5 439v6M747.5 443v2M749.5 454v5M753.5 439v6M754.5 454v2M761.5 442v3M764.5 442v3M767.5 454v4M777.5 440v5M780.5 441v4M781.5 454v2M786.5 454v2M787.5 454v4M794.5 442v3M797.5 441v4M811.5 454v1M823.5 443v2M831.5 441v4M835.5 442v3M843.5 454v3M846.5 441v4M856.5 454v1M857.5 443v2M861.5 444v1M864.5 440v5M870.5 440v5M888.5 442v3M892.5 442v3M895.5 454v2M897.5 441v4M898.5 442v3M901.5 454v1M902.5 454v4M903.5 444v1M915.5 444v1M919.5 439v6M927.5 440v5M938.5 454v4M944.5 440v5M946.5 443v2M947.5 454v3M948.5 443v2M959.5 454v2M960.5 443v2M963.5 454v3M976.5 454v6M986.5 454v1M988.5 454v4M989.5 454v4M1005.5 441v4M1012.5 454v6M1014.5 442v3M1015.5 441v4M1018.5 443v2M1020.5 454v6" stroke="#7878d8" stroke-width="1" fill="none"/>
</svg>
<svg width="1026" height="715" viewBox="0 0 1026 715">
<circle cx="32.5" cy="21.2" r="15.4" fill="#6d4c3f"/>
<rect x="25" y="15" width="15" height="3" fill="#fff"/><rect x="25" y="20" width="15" height="3" fill="#fff"/><rect x="25" y="25" width="15" height="3" fill="#fff"/>
<rect x="65.5" y="19.5" width="101" height="36" fill="#c4c4f2" stroke="#e09264" stroke-width="1"/>
<rect x="67.5" y="21.5" width="97" height="32" fill="none" stroke="#14146e" stroke-width="1.2"/>
<rect x="70" y="24" width="9" height="27" fill="#0000f0"/>
<rect x="167.5" y="20.5" width="97" height="34" fill="none" stroke="#a8aaa8" stroke-width="1"/>
<rect x="264.5" y="20.5" width="99" height="34" fill="none" stroke="#a8aaa8" stroke-width="1"/>
<rect x="363.5" y="20.5" width="99" height="34" fill="none" stroke="#a8aaa8" stroke-width="1"/>
<rect x="462.5" y="20.5" width="64" height="34" fill="none" stroke="#a8aaa8" stroke-width="1"/>
<rect x="169.5" y="24.5" width="8" height="26" fill="none" stroke="#d050d0" stroke-width="1.3"/>
<rect x="268.5" y="24.5" width="8" height="26" fill="none" stroke="#60c060" stroke-width="1.3"/>
<rect x="367.5" y="24.5" width="8" height="26" fill="none" stroke="#c04050" stroke-width="1.3"/>
<rect x="466.5" y="24.5" width="8" height="26" fill="none" stroke="#c04050" stroke-width="1.3"/>
<rect x="106" y="38" width="13" height="1" fill="#000"/>
<rect x="106" y="47" width="13" height="1" fill="#000"/>
<rect x="106" y="48" width="13" height="3" fill="url(#hatch)"/>
<path d="M112.2 40.65H109.45V42.75H111.4V45.15H108.6" stroke="#000" stroke-width="1.35" fill="none"/>
<rect x="114.65" y="40.65" width="2.75" height="4.5" stroke="#000" stroke-width="1.35" fill="none"/>
<rect x="205" y="38" width="13" height="1" fill="#000"/>
<rect x="205" y="47" width="13" height="1" fill="#000"/>
<rect x="205" y="48" width="13" height="3" fill="url(#hatch)"/>
<path d="M211.2 40.65H208.45V42.75H210.4V45.15H207.6" stroke="#000" stroke-width="1.35" fill="none"/>
<rect x="213.65" y="40.65" width="2.75" height="4.5" stroke="#000" stroke-width="1.35" fill="none"/>
<rect x="304" y="38" width="13" height="1" fill="#000"/>
<rect x="304" y="47" width="13" height="1" fill="#000"/>
<rect x="304" y="48" width="13" height="3" fill="url(#hatch)"/>
<path d="M308.4 40V45.8M308.4 40.5L306.8 41.9M311.5 45.8V40.2L313.5 43.6L315.4 40.2V45.8" stroke="#000" stroke-width="1.25" fill="none"/>
<rect x="403" y="38" width="13" height="1" fill="#000"/>
<rect x="403" y="47" width="13" height="1" fill="#000"/>
<rect x="403" y="48" width="13" height="3" fill="url(#hatch)"/>
<path d="M407.4 40V45.8M407.4 40.5L405.8 41.9M410.5 45.8V40.2L412.5 43.6L414.4 40.2V45.8" stroke="#000" stroke-width="1.25" fill="none"/>
<path d="M655.5 20.5H1023.5M655.5 20.5V54.5H1023.5M846.5 20.5V54.5M914.5 20.5V54.5M1023.5 20.5V54.5" stroke="#a8aaa8" stroke-width="1" fill="none"/>
<path d="M733 34.5H739.5V22.5H747" stroke="#000" stroke-width="1.2" fill="none"/><path d="M739.6 26.3L736 29.8H743.2Z" fill="#000"/>
<path d="M584.2 29.5V23.3H607V37.8H594" stroke="#4a3a36" stroke-width="1.9" stroke-dasharray="3.7 1.6" fill="none"/>
<circle cx="585.9" cy="37.8" r="8.8" fill="#f5faf6" stroke="#4a3a36" stroke-width="2"/>
<path d="M582 37.8H590M586 34V41.7" stroke="#4a3a36" stroke-width="1.7"/>
<path d="M594 46L598 50.2" stroke="#6a4e42" stroke-width="4.4" stroke-linecap="round"/>
<rect x="512" y="59" width="8" height="1.3" fill="#000"/><rect x="515" y="59" width="2" height="11" fill="#000"/><rect x="522" y="56" width="1" height="17" fill="#000"/><path d="M517 67H523V73Z" fill="#000"/>
<path d="M530 57V696" stroke="#404040" stroke-width="2" stroke-dasharray="9.5 3.4 3.7 3.4" stroke-dashoffset="0.8"/>
<path d="M90.2 29.3V43.9M90.2 29.6L86.8 33.2" stroke="#000" stroke-width="1.6" fill="none"/>
<path d="M907.3 39.2V51.9M907.3 39.5L904 42.6" stroke="#000" stroke-width="1.9" fill="none"/>
<path d="M6 696.5H22M6 701.5H21M9 704.5H18M11 707.5H16M13.5 696V701" stroke="#10109a" stroke-width="1" fill="none"/>
<rect x="1024" y="0" width="2" height="715" fill="#000"/>
<rect x="0" y="710" width="1026" height="5" fill="#000"/>
</svg>
<span class="t" style="left:9.53px;top:38.92px;font-weight:700;font-size:14.06px;color:#5b4a40;transform:scaleX(1.0594)">MENU</span>
<span class="t" style="left:961.75px;top:2.78px;font-weight:400;font-size:17.54px;color:#000;-webkit-text-stroke:0.6px #000;transform:scaleX(0.9528)">Stopped</span>
<span class="t" style="left:848.49px;top:21.21px;font-weight:400;font-size:16.09px;color:#000;-webkit-text-stroke:0.6px #000;transform:scaleX(1.0151)">History</span>
<span class="t" style="left:916.39px;top:21.21px;font-weight:400;font-size:16.09px;color:#000;-webkit-text-stroke:0.6px #000;transform:scaleX(0.9420)">Normal</span>
<span class="t" style="left:480.58px;top:28.10px;font-weight:400;font-size:18.70px;color:#000;-webkit-text-stroke:0.4px #000;transform:scaleX(0.8848)">Logic</span>
<span class="t" style="left:184.35px;top:25.73px;font-weight:400;font-size:22.54px;color:#000;transform:scaleX(0.8387)">2</span>
<span class="t" style="left:283.54px;top:25.73px;font-weight:400;font-size:22.54px;color:#000;transform:scaleX(0.8403)">3</span>
<span class="t" style="left:382.59px;top:25.73px;font-weight:400;font-size:22.54px;color:#000;transform:scaleX(0.7277)">4</span>
<span class="t" style="left:658.27px;top:19.70px;font-weight:400;font-size:18.59px;color:#000;-webkit-text-stroke:0.6px #000;transform:scaleX(0.6909)">E</span>
<span class="t" style="left:667.84px;top:19.70px;font-weight:400;font-size:18.59px;color:#000;-webkit-text-stroke:0.6px #000;transform:scaleX(0.8845)">d</span>
<span class="t" style="left:677.11px;top:19.70px;font-weight:400;font-size:18.59px;color:#000;-webkit-text-stroke:0.6px #000;transform:scaleX(0.7889)">g</span>
<span class="t" style="left:685.27px;top:19.70px;font-weight:400;font-size:18.59px;color:#000;-webkit-text-stroke:0.6px #000;transform:scaleX(0.8675)">e</span>
<span class="t" style="left:659.04px;top:34.38px;font-weight:400;font-size:21.55px;color:#000;-webkit-text-stroke:0.6px #000;transform:scaleX(0.5695)">A</span>
<span class="t" style="left:668.87px;top:34.38px;font-weight:400;font-size:21.55px;color:#000;-webkit-text-stroke:0.6px #000;transform:scaleX(0.6661)">u</span>
<span class="t" style="left:677.44px;top:34.38px;font-weight:400;font-size:21.55px;color:#000;-webkit-text-stroke:0.6px #000;transform:scaleX(0.8007)">t</span>
<span class="t" style="left:683.79px;top:34.38px;font-weight:400;font-size:21.55px;color:#000;-webkit-text-stroke:0.6px #000;transform:scaleX(0.5959)">o</span>
<span class="t" style="left:701.47px;top:19.70px;font-weight:400;font-size:18.59px;color:#000;-webkit-text-stroke:0.6px #000;transform:scaleX(0.6830)">C</span>
<span class="t" style="left:710.83px;top:19.70px;font-weight:400;font-size:18.59px;color:#000;-webkit-text-stroke:0.6px #000;transform:scaleX(0.7204)">H</span>
<span class="t" style="left:720.03px;top:19.70px;font-weight:400;font-size:18.59px;color:#000;-webkit-text-stroke:0.6px #000;transform:scaleX(0.7211)">2</span>
<span class="t" style="left:111.33px;top:21.41px;font-weight:400;font-size:17.89px;color:#000;-webkit-text-stroke:0.6px #000;transform:scaleX(0.8003)">5</span>
<span class="t" style="left:119.55px;top:21.41px;font-weight:400;font-size:17.89px;color:#000;-webkit-text-stroke:0.6px #000;transform:scaleX(0.7650)">0</span>
<svg style="position:absolute;left:0;top:0" width="1026" height="715"><rect x="131.00" y="32.40" width="1.90" height="2.3" fill="#000"/></svg>
<span class="t" style="left:135.63px;top:21.41px;font-weight:400;font-size:17.89px;color:#000;-webkit-text-stroke:0.6px #000;transform:scaleX(0.8003)">0</span>
<span class="t" style="left:143.11px;top:21.41px;font-weight:400;font-size:17.89px;color:#000;-webkit-text-stroke:0.6px #000;transform:scaleX(0.8546)">m</span>
<span class="t" style="left:155.54px;top:21.41px;font-weight:400;font-size:17.89px;color:#000;-webkit-text-stroke:0.6px #000;transform:scaleX(0.6487)">V</span>
<span class="t" style="left:218.34px;top:20.35px;font-weight:400;font-size:18.31px;color:#000;-webkit-text-stroke:0.6px #000;transform:scaleX(0.7589)">5</span>
<span class="t" style="left:226.64px;top:20.35px;font-weight:400;font-size:18.31px;color:#000;-webkit-text-stroke:0.6px #000;transform:scaleX(0.7589)">0</span>
<span class="t" style="left:234.64px;top:20.35px;font-weight:400;font-size:18.31px;color:#000;-webkit-text-stroke:0.6px #000;transform:scaleX(0.7589)">0</span>
<span class="t" style="left:242.35px;top:20.35px;font-weight:400;font-size:18.31px;color:#000;-webkit-text-stroke:0.6px #000;transform:scaleX(0.7958)">m</span>
<span class="t" style="left:254.44px;top:20.35px;font-weight:400;font-size:18.31px;color:#000;-webkit-text-stroke:0.6px #000;transform:scaleX(0.6254)">V</span>
<span class="t" style="left:312.13px;top:20.35px;font-weight:400;font-size:18.31px;color:#000;-webkit-text-stroke:0.6px #000;transform:scaleX(0.8402)">2</span>
<svg style="position:absolute;left:0;top:0" width="1026" height="715"><rect x="323.70" y="32.70" width="2.40" height="2.3" fill="#000"/></svg>
<span class="t" style="left:328.80px;top:20.35px;font-weight:400;font-size:18.31px;color:#000;-webkit-text-stroke:0.6px #000;transform:scaleX(0.6784)">0</span>
<span class="t" style="left:336.56px;top:20.35px;font-weight:400;font-size:18.31px;color:#000;-webkit-text-stroke:0.6px #000;transform:scaleX(0.7359)">0</span>
<span class="t" style="left:353.14px;top:20.35px;font-weight:400;font-size:18.31px;color:#000;-webkit-text-stroke:0.6px #000;transform:scaleX(0.6420)">V</span>
<span class="t" style="left:411.13px;top:20.35px;font-weight:400;font-size:18.31px;color:#000;-webkit-text-stroke:0.6px #000;transform:scaleX(0.8402)">2</span>
<svg style="position:absolute;left:0;top:0" width="1026" height="715"><rect x="422.70" y="32.70" width="2.40" height="2.3" fill="#000"/></svg>
<span class="t" style="left:427.80px;top:20.35px;font-weight:400;font-size:18.31px;color:#000;-webkit-text-stroke:0.6px #000;transform:scaleX(0.6784)">0</span>
<span class="t" style="left:435.56px;top:20.35px;font-weight:400;font-size:18.31px;color:#000;-webkit-text-stroke:0.6px #000;transform:scaleX(0.7359)">0</span>
<span class="t" style="left:452.14px;top:20.35px;font-weight:400;font-size:18.31px;color:#000;-webkit-text-stroke:0.6px #000;transform:scaleX(0.6420)">V</span>
<span class="t" style="left:658.12px;top:2.63px;font-weight:400;font-size:17.75px;color:#000;-webkit-text-stroke:0.6px #000;transform:scaleX(0.8793)">2</span>
<span class="t" style="left:666.67px;top:2.63px;font-weight:400;font-size:17.75px;color:#000;-webkit-text-stroke:0.6px #000;transform:scaleX(0.7474)">0</span>
<span class="t" style="left:674.47px;top:2.63px;font-weight:400;font-size:17.75px;color:#000;-webkit-text-stroke:0.6px #000;transform:scaleX(0.8174)">2</span>
<span class="t" style="left:682.96px;top:2.63px;font-weight:400;font-size:17.75px;color:#000;-webkit-text-stroke:0.6px #000;transform:scaleX(0.7663)">4</span>
<svg style="position:absolute;left:0;top:0" width="1026" height="715"><path d="M691.80 17.10L698.20 4.20" stroke="#000" stroke-width="1.6" fill="none"/></svg>
<span class="t" style="left:699.74px;top:2.63px;font-weight:400;font-size:17.75px;color:#000;-webkit-text-stroke:0.6px #000;transform:scaleX(0.7948)">0</span>
<svg style="position:absolute;left:0;top:0" width="1026" height="715"><path d="M711.95 4.20V16.80M711.95 4.80L708.40 7.60" stroke="#000" stroke-width="1.7" fill="none"/></svg>
<svg style="position:absolute;left:0;top:0" width="1026" height="715"><path d="M716.10 17.10L722.60 4.20" stroke="#000" stroke-width="1.6" fill="none"/></svg>
<span class="t" style="left:724.04px;top:2.63px;font-weight:400;font-size:17.75px;color:#000;-webkit-text-stroke:0.6px #000;transform:scaleX(0.7830)">0</span>
<span class="t" style="left:731.48px;top:2.63px;font-weight:400;font-size:17.75px;color:#000;-webkit-text-stroke:0.6px #000;transform:scaleX(0.8779)">5</span>
<svg style="position:absolute;left:0;top:0" width="1026" height="715"><path d="M752.95 4.30V16.80M752.95 4.90L750.40 7.70" stroke="#000" stroke-width="1.7" fill="none"/></svg>
<span class="t" style="left:755.60px;top:2.75px;font-weight:400;font-size:17.61px;color:#000;-webkit-text-stroke:0.6px #000;transform:scaleX(0.7055)">5</span>
<svg style="position:absolute;left:0;top:0" width="1026" height="715"><rect x="764.30" y="14.50" width="2.30" height="2.3" fill="#000"/><rect x="764.30" y="8.18" width="2.30" height="2.3" fill="#000"/></svg>
<svg style="position:absolute;left:0;top:0" width="1026" height="715"><path d="M771.65 4.30V16.80M771.65 4.90L769.00 7.70" stroke="#000" stroke-width="1.7" fill="none"/></svg>
<span class="t" style="left:775.35px;top:2.75px;font-weight:400;font-size:17.61px;color:#000;-webkit-text-stroke:0.6px #000;transform:scaleX(0.7365)">2</span>
<svg style="position:absolute;left:0;top:0" width="1026" height="715"><rect x="784.60" y="14.50" width="2.30" height="2.3" fill="#000"/><rect x="784.60" y="8.18" width="2.30" height="2.3" fill="#000"/></svg>
<span class="t" style="left:788.78px;top:2.75px;font-weight:400;font-size:17.61px;color:#000;-webkit-text-stroke:0.6px #000;transform:scaleX(0.7414)">0</span>
<span class="t" style="left:796.44px;top:2.75px;font-weight:400;font-size:17.61px;color:#000;-webkit-text-stroke:0.6px #000;transform:scaleX(0.8012)">0</span>
<span class="t" style="left:698.15px;top:37.99px;font-weight:400;font-size:17.32px;color:#000;-webkit-text-stroke:0.6px #000;transform:scaleX(0.8627)">2</span>
<span class="t" style="left:706.59px;top:37.99px;font-weight:400;font-size:17.32px;color:#000;-webkit-text-stroke:0.6px #000;transform:scaleX(0.7413)">0</span>
<span class="t" style="left:714.04px;top:37.99px;font-weight:400;font-size:17.32px;color:#000;-webkit-text-stroke:0.6px #000;transform:scaleX(0.8494)">m</span>
<span class="t" style="left:726.34px;top:37.99px;font-weight:400;font-size:17.32px;color:#000;-webkit-text-stroke:0.6px #000;transform:scaleX(0.6698)">V</span>
<span class="t" style="left:953.26px;top:37.47px;font-weight:400;font-size:18.17px;color:#000;-webkit-text-stroke:0.6px #000;transform:scaleX(0.8136)">6</span>
<span class="t" style="left:961.14px;top:37.47px;font-weight:400;font-size:18.17px;color:#000;-webkit-text-stroke:0.6px #000;transform:scaleX(0.8347)">2</span>
<svg style="position:absolute;left:0;top:0" width="1026" height="715"><rect x="972.70" y="49.70" width="2.60" height="2.3" fill="#000"/></svg>
<span class="t" style="left:977.23px;top:37.47px;font-weight:400;font-size:18.17px;color:#000;-webkit-text-stroke:0.6px #000;transform:scaleX(0.7879)">5</span>
<span class="t" style="left:985.08px;top:37.47px;font-weight:400;font-size:18.17px;color:#000;-webkit-text-stroke:0.6px #000;transform:scaleX(0.8604)">k</span>
<span class="t" style="left:993.46px;top:37.47px;font-weight:400;font-size:18.17px;color:#000;-webkit-text-stroke:0.6px #000;transform:scaleX(0.6605)">S</span>
<svg style="position:absolute;left:0;top:0" width="1026" height="715"><path d="M1002.70 52.30L1008.50 39.10" stroke="#000" stroke-width="1.6" fill="none"/></svg>
<span class="t" style="left:1011.55px;top:37.47px;font-weight:400;font-size:18.17px;color:#000;-webkit-text-stroke:0.6px #000;transform:scaleX(0.8224)">s</span>
<span class="t" style="left:946.02px;top:58.12px;font-weight:400;font-size:18.45px;color:#000;-webkit-text-stroke:0.6px #000;transform:scaleX(0.8457)">2</span>
<span class="t" style="left:955.14px;top:58.12px;font-weight:400;font-size:18.45px;color:#000;-webkit-text-stroke:0.6px #000;transform:scaleX(0.7531)">0</span>
<span class="t" style="left:963.50px;top:58.12px;font-weight:400;font-size:18.45px;color:#000;-webkit-text-stroke:0.6px #000;transform:scaleX(0.8101)">0</span>
<span class="t" style="left:971.77px;top:58.12px;font-weight:400;font-size:18.45px;color:#000;-webkit-text-stroke:0.6px #000;transform:scaleX(0.6891)">m</span>
<span class="t" style="left:982.45px;top:58.12px;font-weight:400;font-size:18.45px;color:#000;-webkit-text-stroke:0.6px #000;transform:scaleX(0.8099)">s</span>
<svg style="position:absolute;left:0;top:0" width="1026" height="715"><path d="M990.60 73.20L997.10 59.80" stroke="#000" stroke-width="1.6" fill="none"/></svg>
<span class="t" style="left:999.00px;top:58.12px;font-weight:400;font-size:18.45px;color:#000;-webkit-text-stroke:0.6px #000;transform:scaleX(0.9515)">d</span>
<svg style="position:absolute;left:0;top:0" width="1026" height="715"><rect x="1009.80" y="59.80" width="1.80" height="1.8" fill="#000"/><rect x="1009.80" y="63.20" width="1.80" height="9.70" fill="#000"/></svg>
<span class="t" style="left:1012.74px;top:58.12px;font-weight:400;font-size:18.45px;color:#000;-webkit-text-stroke:0.6px #000;transform:scaleX(0.6747)">v</span>
</body></html>
